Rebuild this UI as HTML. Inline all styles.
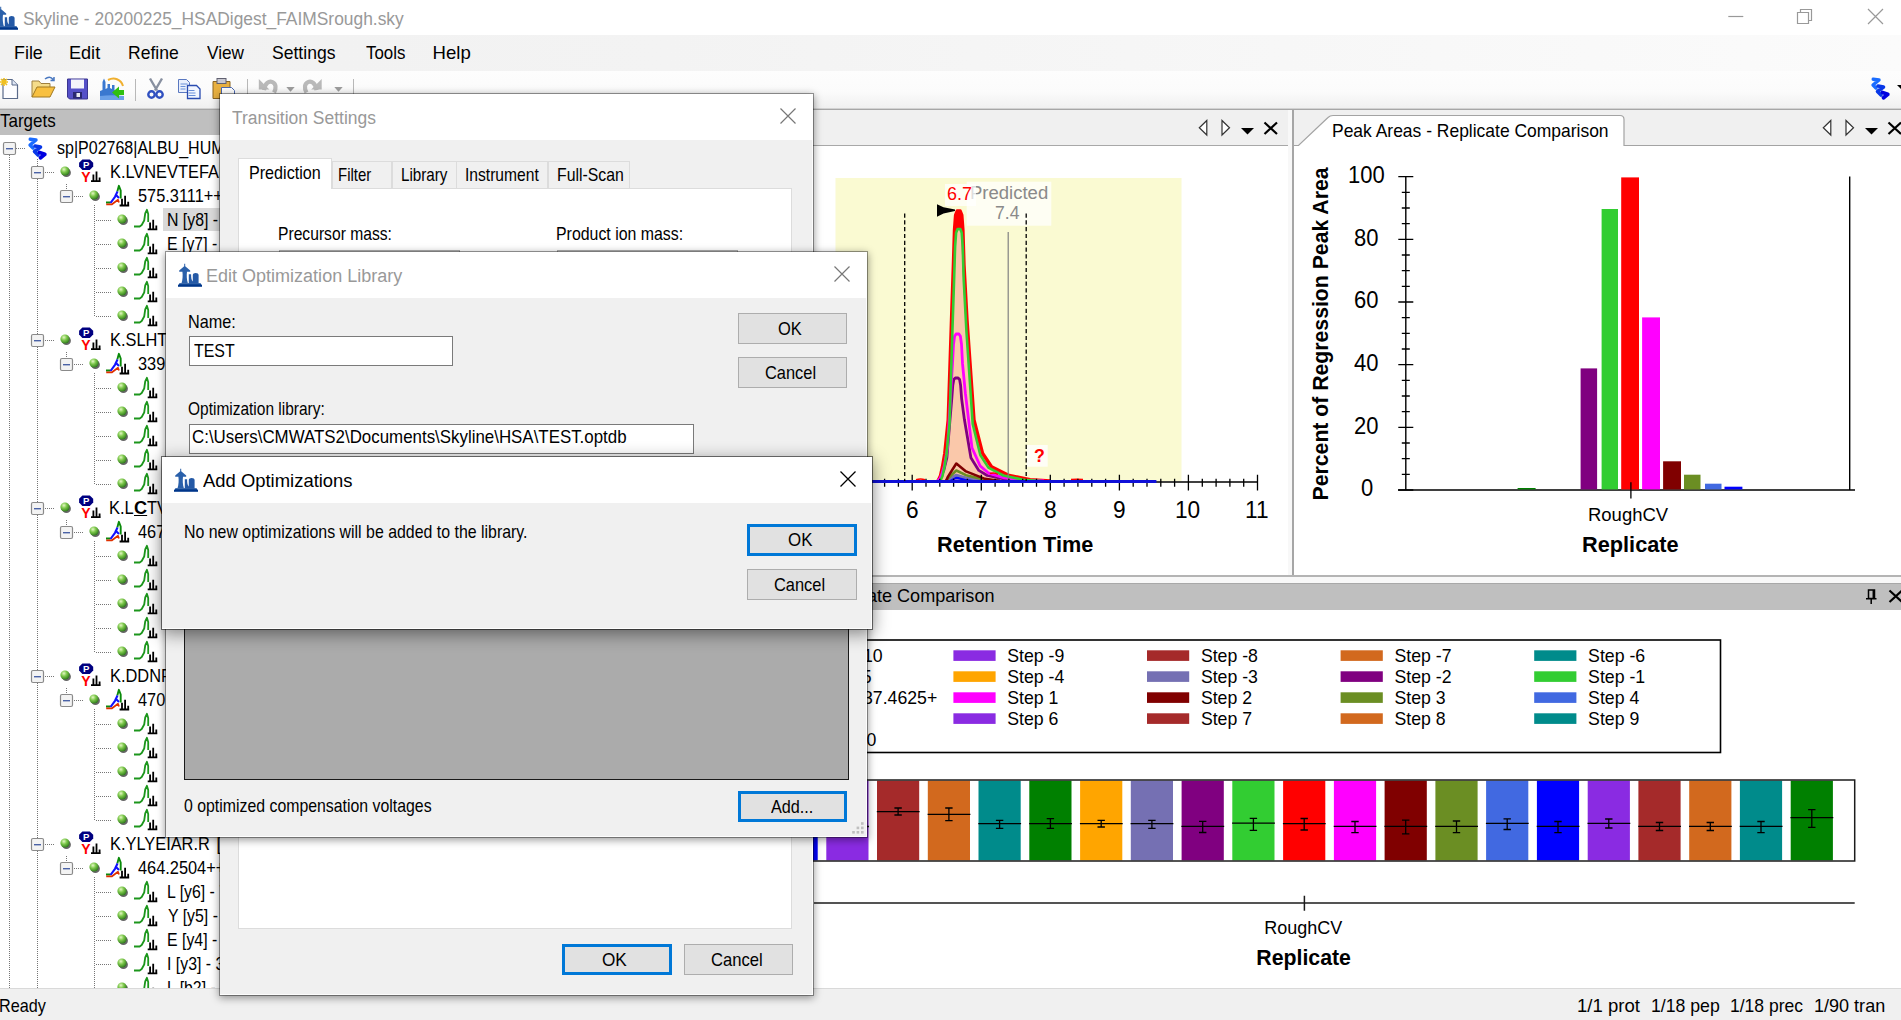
<!DOCTYPE html><html><head><meta charset="utf-8"><title>Skyline - 20200225_HSADigest_FAIMSrough.sky</title><style>
html,body{margin:0;padding:0;}
body{width:1901px;height:1020px;overflow:hidden;background:#fff;position:relative;font-family:"Liberation Sans",sans-serif;}
.b{position:absolute;box-sizing:border-box;}
.t{position:absolute;white-space:pre;line-height:normal;transform-origin:0 0;font-family:"Liberation Sans",sans-serif;}
.i{position:absolute;overflow:visible;}
.btn{background:#e1e1e1;border:1px solid #adadad;}
.btnd{background:#e1e1e1;border:3px solid #0078d7;}
.dlg{background:#f0f0f0;background-clip:padding-box;border:1px solid rgba(0,0,0,0.37);box-shadow:0 2px 8px 0 rgba(0,0,0,0.40),inset -1px -1px 0 rgba(255,255,255,0.85);}
.dlga{border-color:rgba(0,0,0,0.52);box-shadow:0 4px 16px 0 rgba(0,0,0,0.44),inset -1px -1px 0 rgba(255,255,255,0.85);}
.inp{background:#fff;border:1px solid #7a7a7a;}
</style></head><body>
<div class="b" style="left:0;top:0;width:1901px;height:35px;background:#fff">
<svg class="i" style="left:-6px;top:5.8px;" width="24" height="24" viewBox="0 0 24 24"><path d="M6.2 0.8h1v2.4l5 4.2v1.3h-3.2c-0.5 3.5-0.3 8 0.9 11.6h-6.4c1.2-3.6 1.4-8.1 0.9-11.6h-3.2v-1.3l5-4.2z" fill="#2a60aa"/><path d="M10.8 11.2h2.3c0 3.5 0.3 6 1.7 7.2v-6.4c0-1.3 1.2-2.1 2.9-2.1s2.9 0.8 2.9 2.1v8.4h-9.8z" fill="#2459a6"/><path d="M1.5 20.2h21l1.5 2v1.3h-24v-1.3z" fill="#0d4596"/><rect x="0" y="22" width="24" height="1.6" fill="#00358a"/></svg>
<span class="t" style="left:22.80px;top:9px;font-size:17.6px;line-height:20px;color:#999;transform:scaleX(0.9881);">Skyline - 20200225_HSADigest_FAIMSrough.sky</span>
<svg class="i" style="left:1720px;top:0px;" width="181" height="35" viewBox="0 0 181 35"><path d="M8.3 16.5h15" stroke="#999" stroke-width="1.2"/><path d="M77.5 12.5h11v11h-11zM80.5 12.5v-3h11v11h-3" stroke="#999" stroke-width="1.2" fill="none"/><path d="M148 9l15 15M163 9l-15 15" stroke="#999" stroke-width="1.2"/></svg>
</div>
<div class="b" style="left:0;top:35px;width:1901px;height:36px;background:linear-gradient(to right,#f1f1f1 0%,#f3f3f3 35%,#fbfbfb 100%)">
<span class="t" style="left:13.96px;top:7px;font-size:18.6px;line-height:21px;color:#000;transform:scaleX(0.9607);">File</span>
<span class="t" style="left:68.94px;top:7px;font-size:18.6px;line-height:21px;color:#000;transform:scaleX(0.9725);">Edit</span>
<span class="t" style="left:127.98px;top:7px;font-size:18.6px;line-height:21px;color:#000;transform:scaleX(0.9437);">Refine</span>
<span class="t" style="left:206.94px;top:7px;font-size:18.6px;line-height:21px;color:#000;transform:scaleX(0.9250);">View</span>
<span class="t" style="left:272.17px;top:7px;font-size:18.6px;line-height:21px;color:#000;transform:scaleX(0.9448);">Settings</span>
<span class="t" style="left:365.60px;top:7px;font-size:18.6px;line-height:21px;color:#000;transform:scaleX(0.9075);">Tools</span>
<span class="t" style="left:432.50px;top:7px;font-size:18.6px;line-height:21px;color:#000;">Help</span>
</div>
<div class="b" style="left:0;top:71px;width:1901px;height:38px;background:linear-gradient(#fdfdfd,#fbfbfb 55%,#efefef)"></div>
<div class="b" style="left:0;top:108px;width:1901px;height:1px;background:#d2d2d2"></div>
<div class="b" style="left:0;top:109px;width:1901px;height:1px;background:#a6a6a6"></div>
<svg class="i" style="left:0px;top:0px;" width="400" height="110" viewBox="0 0 400 110"><path d="M3 79.5h9l5.5 5.5v13.5h-14.5z" fill="#fdfdff" stroke="#5a6a8a" stroke-width="1.2"/><path d="M12 79.5v5.5h5.5" fill="#dfe6f5" stroke="#5a6a8a" stroke-width="1"/><path d="M0 82h8M4 78v8M1 79l6 6M7 79l-6 6" stroke="#f0c020" stroke-width="1.6"/><path d="M32 97v-16h7l2 2.5h9v4" fill="#f5dc8a" stroke="#a08040" stroke-width="1"/><path d="M32 97l5-10h18l-5 10z" fill="#f8c040" stroke="#a07820" stroke-width="1"/><path d="M45 79c3-2.5 6-2.5 8 0.5M54 77v3.5h-3.5" stroke="#4a78c0" stroke-width="1.5" fill="none"/><path d="M67.5 79h20v20h-18l-2-2z" fill="#5550c8" stroke="#3a3590" stroke-width="1"/><rect x="71" y="79.5" width="13" height="9" fill="#f4f4fa"/><rect x="73" y="92" width="9" height="6.5" fill="#2a2870"/><rect x="76.5" y="93" width="3.5" height="4" fill="#e8e8f0"/><path d="M100 100v-9l2.5-1v-8l1.5-3.5 1.5 3.5v7l2-1v-4h2.5v4l2 1v-4h2.5v5l2 2v8z" fill="#3a78d0"/><path d="M100 100h24v-4c-8-1-16-1-24 0z" fill="#6aa0e8"/><path d="M108 80c6-3 13-1 15 6" stroke="#f0b030" stroke-width="2" fill="none"/><path d="M124 90v5h-5v3.5l-7-6 7-6v3.5z" fill="#30c010"/><path d="M135.5 79v22" stroke="#b8b8b8" stroke-width="1"/><path d="M247.5 79v22" stroke="#b8b8b8" stroke-width="1"/><path d="M353.5 79v22" stroke="#b8b8b8" stroke-width="1"/><path d="M150 78.5l7 12M162 78.5l-7 12" stroke="#8890a0" stroke-width="2.4"/><circle cx="151.5" cy="94.5" r="3.2" fill="none" stroke="#3050c0" stroke-width="2.4"/><circle cx="159.5" cy="94.5" r="3.2" fill="none" stroke="#3050c0" stroke-width="2.4"/><path d="M178.5 79.5h8l3 3v10h-11z" fill="#e9effc" stroke="#5a78c0" stroke-width="1"/><path d="M187.500 85.500h9l3.500 3.500v9.500h-12.500z" fill="#f2f6ff" stroke="#2a4cb0" stroke-width="1.300"/><path d="M180.5 84h7M180.5 86.5h5M180.5 89h5M188.5 90.500h6M188.500 93h7M188.500 95.500h7" stroke="#6a90d8" stroke-width="1"/><path d="M213 81.500h17v17h-17z" fill="#e8b040" stroke="#8a6420" stroke-width="1"/><rect x="217" y="78.500" width="9" height="5" fill="#c8c8d0" stroke="#606070" stroke-width="1"/><path d="M221.5 87.500h10l3 3v9h-13z" fill="#fff" stroke="#4a68b0" stroke-width="1"/><g transform="translate(0,-1.400)"><path d="M264 91.500c1-7 5-9.500 8.500-8 3.500 1.500 4 6 1.500 10.500" stroke="#b9b9b9" stroke-width="4.200" fill="none"/><path d="M258.800 80.500v10.500h10.500z" fill="#b9b9b9"/><path d="M286.300 88.500h8.400l-4.200 4.600z" fill="#9d9d9d"/></g><g transform="translate(0,-1.400)"><path d="M316.500 91.500c-1-7-5-9.500-8.500-8-3.500 1.500-4 6-1.500 10.500" stroke="#b9b9b9" stroke-width="4.200" fill="none"/><path d="M321.700 80.500v10.500h-10.500z" fill="#b9b9b9"/><path d="M334.300 88.500h8.400l-4.200 4.600z" fill="#9d9d9d"/></g></svg>
<svg class="i" style="left:1871px;top:77px;" width="19" height="23" viewBox="0 0 19 23"><g fill="none" stroke-linecap="round" stroke-linejoin="round"><path d="M2.2 2.2L8 3L2 8L5 11" stroke="#1a6cff" stroke-width="3.4"/><path d="M7 9L12.500 10L6.500 14.500L10 18" stroke="#0838e8" stroke-width="3.600"/><path d="M11.500 15.500L16.800 17.300L12.500 20.800" stroke="#0000e0" stroke-width="3.800"/></g></svg>
<svg class="i" style="left:1895px;top:85px;" width="6" height="6" viewBox="0 0 6 6"><path d="M2 0h8l-4 4z" fill="#000"/></svg>
<div class="b" style="left:0;top:988px;width:1901px;height:32px;background:#f0f0f0">
<span class="t" style="left:-0.82px;top:7px;font-size:18.4px;line-height:21px;color:#000;transform:scaleX(0.8814);">Ready</span>
</div>
<div class="b" style="left:0;top:988px;width:1901px;height:1px;background:#d9d9d9"></div>
<span class="t" style="left:1577.41px;top:995px;font-size:18.4px;line-height:21px;color:#000;transform:scaleX(1.0076);">1/1 prot</span>
<span class="t" style="left:1651.08px;top:995px;font-size:18.4px;line-height:21px;color:#000;transform:scaleX(0.9606);">1/18 pep</span>
<span class="t" style="left:1730.49px;top:995px;font-size:18.4px;line-height:21px;color:#000;transform:scaleX(0.9517);">1/18 prec</span>
<span class="t" style="left:1814.25px;top:995px;font-size:18.4px;line-height:21px;color:#000;transform:scaleX(0.9806);">1/90 tran</span>
<div class="b" style="left:0;top:110px;width:830px;height:25px;background:#bfbfbf"></div>
<span class="t" style="left:-0.10px;top:110px;font-size:18.4px;line-height:21px;color:#000;transform:scaleX(0.9242);">Targets</span>
<div class="b" style="left:0;top:135px;width:830px;height:853px;background:#fff;overflow:hidden">
<svg class="i" style="left:0px;top:0px;" width="830" height="854" viewBox="0 0 830 854"><path d="M9.5 20V860" stroke="#757575" stroke-width="1" stroke-dasharray="1 1"/><path d="M37.5 24V860" stroke="#757575" stroke-width="1" stroke-dasharray="1 1"/><path d="M16 13.5H26" stroke="#757575" stroke-width="1" stroke-dasharray="1 1"/><path d="M45 37.5H54" stroke="#757575" stroke-width="1" stroke-dasharray="1 1"/><path d="M66.5 49V54" stroke="#757575" stroke-width="1" stroke-dasharray="1 1"/><path d="M74 61.5H83" stroke="#757575" stroke-width="1" stroke-dasharray="1 1"/><path d="M94.5 70V182" stroke="#757575" stroke-width="1" stroke-dasharray="1 1"/><path d="M96 85.5H111" stroke="#757575" stroke-width="1" stroke-dasharray="1 1"/><path d="M96 109.5H111" stroke="#757575" stroke-width="1" stroke-dasharray="1 1"/><path d="M96 133.5H111" stroke="#757575" stroke-width="1" stroke-dasharray="1 1"/><path d="M96 157.5H111" stroke="#757575" stroke-width="1" stroke-dasharray="1 1"/><path d="M96 181.5H111" stroke="#757575" stroke-width="1" stroke-dasharray="1 1"/><path d="M45 205.5H54" stroke="#757575" stroke-width="1" stroke-dasharray="1 1"/><path d="M66.5 217V222" stroke="#757575" stroke-width="1" stroke-dasharray="1 1"/><path d="M74 229.5H83" stroke="#757575" stroke-width="1" stroke-dasharray="1 1"/><path d="M94.5 238V350" stroke="#757575" stroke-width="1" stroke-dasharray="1 1"/><path d="M96 253.5H111" stroke="#757575" stroke-width="1" stroke-dasharray="1 1"/><path d="M96 277.5H111" stroke="#757575" stroke-width="1" stroke-dasharray="1 1"/><path d="M96 301.5H111" stroke="#757575" stroke-width="1" stroke-dasharray="1 1"/><path d="M96 325.5H111" stroke="#757575" stroke-width="1" stroke-dasharray="1 1"/><path d="M96 349.5H111" stroke="#757575" stroke-width="1" stroke-dasharray="1 1"/><path d="M45 373.5H54" stroke="#757575" stroke-width="1" stroke-dasharray="1 1"/><path d="M66.5 385V390" stroke="#757575" stroke-width="1" stroke-dasharray="1 1"/><path d="M74 397.5H83" stroke="#757575" stroke-width="1" stroke-dasharray="1 1"/><path d="M94.5 406V518" stroke="#757575" stroke-width="1" stroke-dasharray="1 1"/><path d="M96 421.5H111" stroke="#757575" stroke-width="1" stroke-dasharray="1 1"/><path d="M96 445.5H111" stroke="#757575" stroke-width="1" stroke-dasharray="1 1"/><path d="M96 469.5H111" stroke="#757575" stroke-width="1" stroke-dasharray="1 1"/><path d="M96 493.5H111" stroke="#757575" stroke-width="1" stroke-dasharray="1 1"/><path d="M96 517.5H111" stroke="#757575" stroke-width="1" stroke-dasharray="1 1"/><path d="M45 541.5H54" stroke="#757575" stroke-width="1" stroke-dasharray="1 1"/><path d="M66.5 553V558" stroke="#757575" stroke-width="1" stroke-dasharray="1 1"/><path d="M74 565.5H83" stroke="#757575" stroke-width="1" stroke-dasharray="1 1"/><path d="M94.5 574V686" stroke="#757575" stroke-width="1" stroke-dasharray="1 1"/><path d="M96 589.5H111" stroke="#757575" stroke-width="1" stroke-dasharray="1 1"/><path d="M96 613.5H111" stroke="#757575" stroke-width="1" stroke-dasharray="1 1"/><path d="M96 637.5H111" stroke="#757575" stroke-width="1" stroke-dasharray="1 1"/><path d="M96 661.5H111" stroke="#757575" stroke-width="1" stroke-dasharray="1 1"/><path d="M96 685.5H111" stroke="#757575" stroke-width="1" stroke-dasharray="1 1"/><path d="M45 709.5H54" stroke="#757575" stroke-width="1" stroke-dasharray="1 1"/><path d="M66.5 721V726" stroke="#757575" stroke-width="1" stroke-dasharray="1 1"/><path d="M74 733.5H83" stroke="#757575" stroke-width="1" stroke-dasharray="1 1"/><path d="M94.5 742V854" stroke="#757575" stroke-width="1" stroke-dasharray="1 1"/><path d="M96 757.5H111" stroke="#757575" stroke-width="1" stroke-dasharray="1 1"/><path d="M96 781.5H111" stroke="#757575" stroke-width="1" stroke-dasharray="1 1"/><path d="M96 805.5H111" stroke="#757575" stroke-width="1" stroke-dasharray="1 1"/><path d="M96 829.5H111" stroke="#757575" stroke-width="1" stroke-dasharray="1 1"/><path d="M96 853.5H111" stroke="#757575" stroke-width="1" stroke-dasharray="1 1"/></svg>
<svg class="i" style="left:3.0px;top:6.8px;" width="13" height="13" viewBox="0 0 13 13"><rect x="0.5" y="0.5" width="12" height="12" rx="1.500" fill="#f3f3f3" stroke="#8a8a8a" stroke-width="1.200"/><rect x="3" y="6" width="7" height="1.4" fill="#4a62a6"/></svg><svg class="i" style="left:28px;top:1.5px;" width="19" height="23" viewBox="0 0 19 23"><g fill="none" stroke-linecap="round" stroke-linejoin="round"><path d="M2.2 2.2L8 3L2 8L5 11" stroke="#1a6cff" stroke-width="3.4"/><path d="M7 9L12.500 10L6.500 14.500L10 18" stroke="#0838e8" stroke-width="3.600"/><path d="M11.500 15.500L16.800 17.300L12.500 20.800" stroke="#0000e0" stroke-width="3.800"/></g></svg><svg class="i" style="left:31.2px;top:30.7px;" width="13" height="13" viewBox="0 0 13 13"><rect x="0.5" y="0.5" width="12" height="12" rx="1.500" fill="#f3f3f3" stroke="#8a8a8a" stroke-width="1.200"/><rect x="3" y="6" width="7" height="1.4" fill="#4a62a6"/></svg><svg class="i" style="left:58.9px;top:30.3px;" width="13" height="13" viewBox="0 0 13 13"><radialGradient id="g1" cx="0.38" cy="0.32" r="0.7"><stop offset="0" stop-color="#e4f7c4"/><stop offset="0.45" stop-color="#7cc84a"/><stop offset="1" stop-color="#2f7a1c"/></radialGradient><ellipse cx="7.400" cy="7.700" rx="4.500" ry="4.400" fill="#333" opacity="0.750"/><circle cx="6" cy="6" r="4.600" fill="url(#g1)"/></svg><svg class="i" style="left:79px;top:24px;" width="23" height="24" viewBox="0 0 23 24"><path d="M3.4 0.4h7.4l3.4 3.300v3.800l-3.400 3.400h-7.400l-3.300-3.400v-3.800z" fill="#000080"/><text x="7.200" y="9.300" font-size="9.600" font-weight="bold" fill="#fff" text-anchor="middle" font-family="Liberation Sans,sans-serif">P</text><text x="7" y="22.6" font-size="14" font-weight="bold" fill="#f00" text-anchor="middle" font-family="Liberation Sans,sans-serif">Y</text><path d="M12 22.2h9.6M14.4 22.2v-6.800M17.5 22.2v-9.700M20.6 22.2v-3.800" stroke="#000" stroke-width="1.800" fill="none"/></svg><svg class="i" style="left:59.8px;top:54.7px;" width="13" height="13" viewBox="0 0 13 13"><rect x="0.5" y="0.5" width="12" height="12" rx="1.500" fill="#f3f3f3" stroke="#8a8a8a" stroke-width="1.200"/><rect x="3" y="6" width="7" height="1.4" fill="#4a62a6"/></svg><svg class="i" style="left:87.5px;top:54.3px;" width="13" height="13" viewBox="0 0 13 13"><radialGradient id="g2" cx="0.38" cy="0.32" r="0.7"><stop offset="0" stop-color="#e4f7c4"/><stop offset="0.45" stop-color="#7cc84a"/><stop offset="1" stop-color="#2f7a1c"/></radialGradient><ellipse cx="7.400" cy="7.700" rx="4.500" ry="4.400" fill="#333" opacity="0.750"/><circle cx="6" cy="6" r="4.600" fill="url(#g2)"/></svg><svg class="i" style="left:105.8px;top:50px;" width="24" height="22" viewBox="0 0 24 22"><path d="M0 17.500H4.500M11.300 6.500L12.900 0.800L14.700 5.500V13.500" stroke="#0a8a0a" stroke-width="1.900" fill="none" stroke-linejoin="round"/><path d="M4.500 18L9 11.800L11.500 6.500M9.500 9.500L13 13" stroke="#1010ff" stroke-width="2.100" fill="none" stroke-linejoin="round"/><path d="M0.200 19.300H6L12 14.800L13 17.500" stroke="#e03000" stroke-width="1.700" fill="none" stroke-linejoin="round"/><path d="M13.6 20.5h9.6M16.0 20.5v-6.800M19.1 20.5v-9.700M22.2 20.5v-3.800" stroke="#000" stroke-width="1.800" fill="none"/></svg><svg class="i" style="left:116.1px;top:78.3px;" width="13" height="13" viewBox="0 0 13 13"><radialGradient id="g3" cx="0.38" cy="0.32" r="0.7"><stop offset="0" stop-color="#e4f7c4"/><stop offset="0.45" stop-color="#7cc84a"/><stop offset="1" stop-color="#2f7a1c"/></radialGradient><ellipse cx="7.400" cy="7.700" rx="4.500" ry="4.400" fill="#333" opacity="0.750"/><circle cx="6" cy="6" r="4.600" fill="url(#g3)"/></svg><svg class="i" style="left:134.3px;top:74px;" width="24" height="22" viewBox="0 0 24 22"><path d="M0 17.500H5.700L7.700 16L10.200 11.500L11.200 4.500L12.900 0.800L14.200 5V13" stroke="#1c961c" stroke-width="1.800" fill="none" stroke-linejoin="round"/><path d="M13.7 20.4h9.6M16.1 20.4v-6.800M19.2 20.4v-9.700M22.3 20.4v-3.800" stroke="#000" stroke-width="1.800" fill="none"/></svg><svg class="i" style="left:116.1px;top:102.3px;" width="13" height="13" viewBox="0 0 13 13"><radialGradient id="g4" cx="0.38" cy="0.32" r="0.7"><stop offset="0" stop-color="#e4f7c4"/><stop offset="0.45" stop-color="#7cc84a"/><stop offset="1" stop-color="#2f7a1c"/></radialGradient><ellipse cx="7.400" cy="7.700" rx="4.500" ry="4.400" fill="#333" opacity="0.750"/><circle cx="6" cy="6" r="4.600" fill="url(#g4)"/></svg><svg class="i" style="left:134.3px;top:98px;" width="24" height="22" viewBox="0 0 24 22"><path d="M0 17.500H5.700L7.700 16L10.200 11.500L11.200 4.500L12.900 0.800L14.200 5V13" stroke="#1c961c" stroke-width="1.800" fill="none" stroke-linejoin="round"/><path d="M13.7 20.4h9.6M16.1 20.4v-6.800M19.2 20.4v-9.700M22.3 20.4v-3.800" stroke="#000" stroke-width="1.800" fill="none"/></svg><svg class="i" style="left:116.1px;top:126.3px;" width="13" height="13" viewBox="0 0 13 13"><radialGradient id="g5" cx="0.38" cy="0.32" r="0.7"><stop offset="0" stop-color="#e4f7c4"/><stop offset="0.45" stop-color="#7cc84a"/><stop offset="1" stop-color="#2f7a1c"/></radialGradient><ellipse cx="7.400" cy="7.700" rx="4.500" ry="4.400" fill="#333" opacity="0.750"/><circle cx="6" cy="6" r="4.600" fill="url(#g5)"/></svg><svg class="i" style="left:134.3px;top:122px;" width="24" height="22" viewBox="0 0 24 22"><path d="M0 17.500H5.700L7.700 16L10.200 11.500L11.200 4.500L12.900 0.800L14.200 5V13" stroke="#1c961c" stroke-width="1.800" fill="none" stroke-linejoin="round"/><path d="M13.7 20.4h9.6M16.1 20.4v-6.800M19.2 20.4v-9.700M22.3 20.4v-3.800" stroke="#000" stroke-width="1.800" fill="none"/></svg><svg class="i" style="left:116.1px;top:150.3px;" width="13" height="13" viewBox="0 0 13 13"><radialGradient id="g6" cx="0.38" cy="0.32" r="0.7"><stop offset="0" stop-color="#e4f7c4"/><stop offset="0.45" stop-color="#7cc84a"/><stop offset="1" stop-color="#2f7a1c"/></radialGradient><ellipse cx="7.400" cy="7.700" rx="4.500" ry="4.400" fill="#333" opacity="0.750"/><circle cx="6" cy="6" r="4.600" fill="url(#g6)"/></svg><svg class="i" style="left:134.3px;top:146px;" width="24" height="22" viewBox="0 0 24 22"><path d="M0 17.500H5.700L7.700 16L10.200 11.500L11.200 4.500L12.900 0.800L14.200 5V13" stroke="#1c961c" stroke-width="1.800" fill="none" stroke-linejoin="round"/><path d="M13.7 20.4h9.6M16.1 20.4v-6.800M19.2 20.4v-9.700M22.3 20.4v-3.800" stroke="#000" stroke-width="1.800" fill="none"/></svg><svg class="i" style="left:116.1px;top:174.3px;" width="13" height="13" viewBox="0 0 13 13"><radialGradient id="g7" cx="0.38" cy="0.32" r="0.7"><stop offset="0" stop-color="#e4f7c4"/><stop offset="0.45" stop-color="#7cc84a"/><stop offset="1" stop-color="#2f7a1c"/></radialGradient><ellipse cx="7.400" cy="7.700" rx="4.500" ry="4.400" fill="#333" opacity="0.750"/><circle cx="6" cy="6" r="4.600" fill="url(#g7)"/></svg><svg class="i" style="left:134.3px;top:170px;" width="24" height="22" viewBox="0 0 24 22"><path d="M0 17.500H5.700L7.700 16L10.200 11.500L11.200 4.500L12.900 0.800L14.200 5V13" stroke="#1c961c" stroke-width="1.800" fill="none" stroke-linejoin="round"/><path d="M13.7 20.4h9.6M16.1 20.4v-6.800M19.2 20.4v-9.700M22.3 20.4v-3.800" stroke="#000" stroke-width="1.800" fill="none"/></svg><svg class="i" style="left:31.2px;top:198.7px;" width="13" height="13" viewBox="0 0 13 13"><rect x="0.5" y="0.5" width="12" height="12" rx="1.500" fill="#f3f3f3" stroke="#8a8a8a" stroke-width="1.200"/><rect x="3" y="6" width="7" height="1.4" fill="#4a62a6"/></svg><svg class="i" style="left:58.9px;top:198.3px;" width="13" height="13" viewBox="0 0 13 13"><radialGradient id="g8" cx="0.38" cy="0.32" r="0.7"><stop offset="0" stop-color="#e4f7c4"/><stop offset="0.45" stop-color="#7cc84a"/><stop offset="1" stop-color="#2f7a1c"/></radialGradient><ellipse cx="7.400" cy="7.700" rx="4.500" ry="4.400" fill="#333" opacity="0.750"/><circle cx="6" cy="6" r="4.600" fill="url(#g8)"/></svg><svg class="i" style="left:79px;top:192px;" width="23" height="24" viewBox="0 0 23 24"><path d="M3.4 0.4h7.4l3.4 3.300v3.800l-3.400 3.400h-7.400l-3.300-3.400v-3.800z" fill="#000080"/><text x="7.200" y="9.300" font-size="9.600" font-weight="bold" fill="#fff" text-anchor="middle" font-family="Liberation Sans,sans-serif">P</text><text x="7" y="22.6" font-size="14" font-weight="bold" fill="#f00" text-anchor="middle" font-family="Liberation Sans,sans-serif">Y</text><path d="M12 22.2h9.6M14.4 22.2v-6.800M17.5 22.2v-9.700M20.6 22.2v-3.800" stroke="#000" stroke-width="1.800" fill="none"/></svg><svg class="i" style="left:59.8px;top:222.7px;" width="13" height="13" viewBox="0 0 13 13"><rect x="0.5" y="0.5" width="12" height="12" rx="1.500" fill="#f3f3f3" stroke="#8a8a8a" stroke-width="1.200"/><rect x="3" y="6" width="7" height="1.4" fill="#4a62a6"/></svg><svg class="i" style="left:87.5px;top:222.3px;" width="13" height="13" viewBox="0 0 13 13"><radialGradient id="g9" cx="0.38" cy="0.32" r="0.7"><stop offset="0" stop-color="#e4f7c4"/><stop offset="0.45" stop-color="#7cc84a"/><stop offset="1" stop-color="#2f7a1c"/></radialGradient><ellipse cx="7.400" cy="7.700" rx="4.500" ry="4.400" fill="#333" opacity="0.750"/><circle cx="6" cy="6" r="4.600" fill="url(#g9)"/></svg><svg class="i" style="left:105.8px;top:218px;" width="24" height="22" viewBox="0 0 24 22"><path d="M0 17.500H4.500M11.300 6.500L12.900 0.800L14.700 5.500V13.500" stroke="#0a8a0a" stroke-width="1.900" fill="none" stroke-linejoin="round"/><path d="M4.500 18L9 11.800L11.500 6.500M9.500 9.500L13 13" stroke="#1010ff" stroke-width="2.100" fill="none" stroke-linejoin="round"/><path d="M0.200 19.300H6L12 14.800L13 17.500" stroke="#e03000" stroke-width="1.700" fill="none" stroke-linejoin="round"/><path d="M13.6 20.5h9.6M16.0 20.5v-6.800M19.1 20.5v-9.700M22.2 20.5v-3.800" stroke="#000" stroke-width="1.800" fill="none"/></svg><svg class="i" style="left:116.1px;top:246.3px;" width="13" height="13" viewBox="0 0 13 13"><radialGradient id="g10" cx="0.38" cy="0.32" r="0.7"><stop offset="0" stop-color="#e4f7c4"/><stop offset="0.45" stop-color="#7cc84a"/><stop offset="1" stop-color="#2f7a1c"/></radialGradient><ellipse cx="7.400" cy="7.700" rx="4.500" ry="4.400" fill="#333" opacity="0.750"/><circle cx="6" cy="6" r="4.600" fill="url(#g10)"/></svg><svg class="i" style="left:134.3px;top:242px;" width="24" height="22" viewBox="0 0 24 22"><path d="M0 17.500H5.700L7.700 16L10.200 11.500L11.200 4.500L12.900 0.800L14.200 5V13" stroke="#1c961c" stroke-width="1.800" fill="none" stroke-linejoin="round"/><path d="M13.7 20.4h9.6M16.1 20.4v-6.800M19.2 20.4v-9.700M22.3 20.4v-3.800" stroke="#000" stroke-width="1.800" fill="none"/></svg><svg class="i" style="left:116.1px;top:270.3px;" width="13" height="13" viewBox="0 0 13 13"><radialGradient id="g11" cx="0.38" cy="0.32" r="0.7"><stop offset="0" stop-color="#e4f7c4"/><stop offset="0.45" stop-color="#7cc84a"/><stop offset="1" stop-color="#2f7a1c"/></radialGradient><ellipse cx="7.400" cy="7.700" rx="4.500" ry="4.400" fill="#333" opacity="0.750"/><circle cx="6" cy="6" r="4.600" fill="url(#g11)"/></svg><svg class="i" style="left:134.3px;top:266px;" width="24" height="22" viewBox="0 0 24 22"><path d="M0 17.500H5.700L7.700 16L10.200 11.500L11.200 4.500L12.900 0.800L14.200 5V13" stroke="#1c961c" stroke-width="1.800" fill="none" stroke-linejoin="round"/><path d="M13.7 20.4h9.6M16.1 20.4v-6.800M19.2 20.4v-9.700M22.3 20.4v-3.800" stroke="#000" stroke-width="1.800" fill="none"/></svg><svg class="i" style="left:116.1px;top:294.3px;" width="13" height="13" viewBox="0 0 13 13"><radialGradient id="g12" cx="0.38" cy="0.32" r="0.7"><stop offset="0" stop-color="#e4f7c4"/><stop offset="0.45" stop-color="#7cc84a"/><stop offset="1" stop-color="#2f7a1c"/></radialGradient><ellipse cx="7.400" cy="7.700" rx="4.500" ry="4.400" fill="#333" opacity="0.750"/><circle cx="6" cy="6" r="4.600" fill="url(#g12)"/></svg><svg class="i" style="left:134.3px;top:290px;" width="24" height="22" viewBox="0 0 24 22"><path d="M0 17.500H5.700L7.700 16L10.200 11.500L11.200 4.500L12.900 0.800L14.200 5V13" stroke="#1c961c" stroke-width="1.800" fill="none" stroke-linejoin="round"/><path d="M13.7 20.4h9.6M16.1 20.4v-6.800M19.2 20.4v-9.700M22.3 20.4v-3.800" stroke="#000" stroke-width="1.800" fill="none"/></svg><svg class="i" style="left:116.1px;top:318.3px;" width="13" height="13" viewBox="0 0 13 13"><radialGradient id="g13" cx="0.38" cy="0.32" r="0.7"><stop offset="0" stop-color="#e4f7c4"/><stop offset="0.45" stop-color="#7cc84a"/><stop offset="1" stop-color="#2f7a1c"/></radialGradient><ellipse cx="7.400" cy="7.700" rx="4.500" ry="4.400" fill="#333" opacity="0.750"/><circle cx="6" cy="6" r="4.600" fill="url(#g13)"/></svg><svg class="i" style="left:134.3px;top:314px;" width="24" height="22" viewBox="0 0 24 22"><path d="M0 17.500H5.700L7.700 16L10.200 11.500L11.200 4.500L12.900 0.800L14.200 5V13" stroke="#1c961c" stroke-width="1.800" fill="none" stroke-linejoin="round"/><path d="M13.7 20.4h9.6M16.1 20.4v-6.800M19.2 20.4v-9.700M22.3 20.4v-3.800" stroke="#000" stroke-width="1.800" fill="none"/></svg><svg class="i" style="left:116.1px;top:342.3px;" width="13" height="13" viewBox="0 0 13 13"><radialGradient id="g14" cx="0.38" cy="0.32" r="0.7"><stop offset="0" stop-color="#e4f7c4"/><stop offset="0.45" stop-color="#7cc84a"/><stop offset="1" stop-color="#2f7a1c"/></radialGradient><ellipse cx="7.400" cy="7.700" rx="4.500" ry="4.400" fill="#333" opacity="0.750"/><circle cx="6" cy="6" r="4.600" fill="url(#g14)"/></svg><svg class="i" style="left:134.3px;top:338px;" width="24" height="22" viewBox="0 0 24 22"><path d="M0 17.500H5.700L7.700 16L10.200 11.500L11.200 4.500L12.900 0.800L14.200 5V13" stroke="#1c961c" stroke-width="1.800" fill="none" stroke-linejoin="round"/><path d="M13.7 20.4h9.6M16.1 20.4v-6.800M19.2 20.4v-9.700M22.3 20.4v-3.800" stroke="#000" stroke-width="1.800" fill="none"/></svg><svg class="i" style="left:31.2px;top:366.7px;" width="13" height="13" viewBox="0 0 13 13"><rect x="0.5" y="0.5" width="12" height="12" rx="1.500" fill="#f3f3f3" stroke="#8a8a8a" stroke-width="1.200"/><rect x="3" y="6" width="7" height="1.4" fill="#4a62a6"/></svg><svg class="i" style="left:58.9px;top:366.3px;" width="13" height="13" viewBox="0 0 13 13"><radialGradient id="g15" cx="0.38" cy="0.32" r="0.7"><stop offset="0" stop-color="#e4f7c4"/><stop offset="0.45" stop-color="#7cc84a"/><stop offset="1" stop-color="#2f7a1c"/></radialGradient><ellipse cx="7.400" cy="7.700" rx="4.500" ry="4.400" fill="#333" opacity="0.750"/><circle cx="6" cy="6" r="4.600" fill="url(#g15)"/></svg><svg class="i" style="left:79px;top:360px;" width="23" height="24" viewBox="0 0 23 24"><path d="M3.4 0.4h7.4l3.4 3.300v3.800l-3.400 3.400h-7.400l-3.300-3.400v-3.800z" fill="#000080"/><text x="7.200" y="9.300" font-size="9.600" font-weight="bold" fill="#fff" text-anchor="middle" font-family="Liberation Sans,sans-serif">P</text><text x="7" y="22.6" font-size="14" font-weight="bold" fill="#f00" text-anchor="middle" font-family="Liberation Sans,sans-serif">Y</text><path d="M12 22.2h9.6M14.4 22.2v-6.800M17.5 22.2v-9.700M20.6 22.2v-3.800" stroke="#000" stroke-width="1.800" fill="none"/></svg><svg class="i" style="left:59.8px;top:390.7px;" width="13" height="13" viewBox="0 0 13 13"><rect x="0.5" y="0.5" width="12" height="12" rx="1.500" fill="#f3f3f3" stroke="#8a8a8a" stroke-width="1.200"/><rect x="3" y="6" width="7" height="1.4" fill="#4a62a6"/></svg><svg class="i" style="left:87.5px;top:390.3px;" width="13" height="13" viewBox="0 0 13 13"><radialGradient id="g16" cx="0.38" cy="0.32" r="0.7"><stop offset="0" stop-color="#e4f7c4"/><stop offset="0.45" stop-color="#7cc84a"/><stop offset="1" stop-color="#2f7a1c"/></radialGradient><ellipse cx="7.400" cy="7.700" rx="4.500" ry="4.400" fill="#333" opacity="0.750"/><circle cx="6" cy="6" r="4.600" fill="url(#g16)"/></svg><svg class="i" style="left:105.8px;top:386px;" width="24" height="22" viewBox="0 0 24 22"><path d="M0 17.500H4.500M11.300 6.500L12.900 0.800L14.700 5.500V13.500" stroke="#0a8a0a" stroke-width="1.900" fill="none" stroke-linejoin="round"/><path d="M4.500 18L9 11.800L11.500 6.500M9.500 9.500L13 13" stroke="#1010ff" stroke-width="2.100" fill="none" stroke-linejoin="round"/><path d="M0.200 19.300H6L12 14.800L13 17.500" stroke="#e03000" stroke-width="1.700" fill="none" stroke-linejoin="round"/><path d="M13.6 20.5h9.6M16.0 20.5v-6.800M19.1 20.5v-9.700M22.2 20.5v-3.800" stroke="#000" stroke-width="1.800" fill="none"/></svg><svg class="i" style="left:116.1px;top:414.3px;" width="13" height="13" viewBox="0 0 13 13"><radialGradient id="g17" cx="0.38" cy="0.32" r="0.7"><stop offset="0" stop-color="#e4f7c4"/><stop offset="0.45" stop-color="#7cc84a"/><stop offset="1" stop-color="#2f7a1c"/></radialGradient><ellipse cx="7.400" cy="7.700" rx="4.500" ry="4.400" fill="#333" opacity="0.750"/><circle cx="6" cy="6" r="4.600" fill="url(#g17)"/></svg><svg class="i" style="left:134.3px;top:410px;" width="24" height="22" viewBox="0 0 24 22"><path d="M0 17.500H5.700L7.700 16L10.200 11.500L11.200 4.500L12.900 0.800L14.200 5V13" stroke="#1c961c" stroke-width="1.800" fill="none" stroke-linejoin="round"/><path d="M13.7 20.4h9.6M16.1 20.4v-6.800M19.2 20.4v-9.700M22.3 20.4v-3.800" stroke="#000" stroke-width="1.800" fill="none"/></svg><svg class="i" style="left:116.1px;top:438.3px;" width="13" height="13" viewBox="0 0 13 13"><radialGradient id="g18" cx="0.38" cy="0.32" r="0.7"><stop offset="0" stop-color="#e4f7c4"/><stop offset="0.45" stop-color="#7cc84a"/><stop offset="1" stop-color="#2f7a1c"/></radialGradient><ellipse cx="7.400" cy="7.700" rx="4.500" ry="4.400" fill="#333" opacity="0.750"/><circle cx="6" cy="6" r="4.600" fill="url(#g18)"/></svg><svg class="i" style="left:134.3px;top:434px;" width="24" height="22" viewBox="0 0 24 22"><path d="M0 17.500H5.700L7.700 16L10.200 11.500L11.200 4.500L12.900 0.800L14.200 5V13" stroke="#1c961c" stroke-width="1.800" fill="none" stroke-linejoin="round"/><path d="M13.7 20.4h9.6M16.1 20.4v-6.800M19.2 20.4v-9.700M22.3 20.4v-3.800" stroke="#000" stroke-width="1.800" fill="none"/></svg><svg class="i" style="left:116.1px;top:462.3px;" width="13" height="13" viewBox="0 0 13 13"><radialGradient id="g19" cx="0.38" cy="0.32" r="0.7"><stop offset="0" stop-color="#e4f7c4"/><stop offset="0.45" stop-color="#7cc84a"/><stop offset="1" stop-color="#2f7a1c"/></radialGradient><ellipse cx="7.400" cy="7.700" rx="4.500" ry="4.400" fill="#333" opacity="0.750"/><circle cx="6" cy="6" r="4.600" fill="url(#g19)"/></svg><svg class="i" style="left:134.3px;top:458px;" width="24" height="22" viewBox="0 0 24 22"><path d="M0 17.500H5.700L7.700 16L10.200 11.500L11.200 4.500L12.900 0.800L14.200 5V13" stroke="#1c961c" stroke-width="1.800" fill="none" stroke-linejoin="round"/><path d="M13.7 20.4h9.6M16.1 20.4v-6.800M19.2 20.4v-9.700M22.3 20.4v-3.800" stroke="#000" stroke-width="1.800" fill="none"/></svg><svg class="i" style="left:116.1px;top:486.3px;" width="13" height="13" viewBox="0 0 13 13"><radialGradient id="g20" cx="0.38" cy="0.32" r="0.7"><stop offset="0" stop-color="#e4f7c4"/><stop offset="0.45" stop-color="#7cc84a"/><stop offset="1" stop-color="#2f7a1c"/></radialGradient><ellipse cx="7.400" cy="7.700" rx="4.500" ry="4.400" fill="#333" opacity="0.750"/><circle cx="6" cy="6" r="4.600" fill="url(#g20)"/></svg><svg class="i" style="left:134.3px;top:482px;" width="24" height="22" viewBox="0 0 24 22"><path d="M0 17.500H5.700L7.700 16L10.200 11.500L11.200 4.500L12.900 0.800L14.200 5V13" stroke="#1c961c" stroke-width="1.800" fill="none" stroke-linejoin="round"/><path d="M13.7 20.4h9.6M16.1 20.4v-6.800M19.2 20.4v-9.700M22.3 20.4v-3.800" stroke="#000" stroke-width="1.800" fill="none"/></svg><svg class="i" style="left:116.1px;top:510.3px;" width="13" height="13" viewBox="0 0 13 13"><radialGradient id="g21" cx="0.38" cy="0.32" r="0.7"><stop offset="0" stop-color="#e4f7c4"/><stop offset="0.45" stop-color="#7cc84a"/><stop offset="1" stop-color="#2f7a1c"/></radialGradient><ellipse cx="7.400" cy="7.700" rx="4.500" ry="4.400" fill="#333" opacity="0.750"/><circle cx="6" cy="6" r="4.600" fill="url(#g21)"/></svg><svg class="i" style="left:134.3px;top:506px;" width="24" height="22" viewBox="0 0 24 22"><path d="M0 17.500H5.700L7.700 16L10.200 11.500L11.200 4.500L12.900 0.800L14.200 5V13" stroke="#1c961c" stroke-width="1.800" fill="none" stroke-linejoin="round"/><path d="M13.7 20.4h9.6M16.1 20.4v-6.800M19.2 20.4v-9.700M22.3 20.4v-3.800" stroke="#000" stroke-width="1.800" fill="none"/></svg><svg class="i" style="left:31.2px;top:534.7px;" width="13" height="13" viewBox="0 0 13 13"><rect x="0.5" y="0.5" width="12" height="12" rx="1.500" fill="#f3f3f3" stroke="#8a8a8a" stroke-width="1.200"/><rect x="3" y="6" width="7" height="1.4" fill="#4a62a6"/></svg><svg class="i" style="left:58.9px;top:534.3px;" width="13" height="13" viewBox="0 0 13 13"><radialGradient id="g22" cx="0.38" cy="0.32" r="0.7"><stop offset="0" stop-color="#e4f7c4"/><stop offset="0.45" stop-color="#7cc84a"/><stop offset="1" stop-color="#2f7a1c"/></radialGradient><ellipse cx="7.400" cy="7.700" rx="4.500" ry="4.400" fill="#333" opacity="0.750"/><circle cx="6" cy="6" r="4.600" fill="url(#g22)"/></svg><svg class="i" style="left:79px;top:528px;" width="23" height="24" viewBox="0 0 23 24"><path d="M3.4 0.4h7.4l3.4 3.300v3.800l-3.400 3.400h-7.400l-3.300-3.400v-3.800z" fill="#000080"/><text x="7.200" y="9.300" font-size="9.600" font-weight="bold" fill="#fff" text-anchor="middle" font-family="Liberation Sans,sans-serif">P</text><text x="7" y="22.6" font-size="14" font-weight="bold" fill="#f00" text-anchor="middle" font-family="Liberation Sans,sans-serif">Y</text><path d="M12 22.2h9.6M14.4 22.2v-6.800M17.5 22.2v-9.700M20.6 22.2v-3.800" stroke="#000" stroke-width="1.800" fill="none"/></svg><svg class="i" style="left:59.8px;top:558.7px;" width="13" height="13" viewBox="0 0 13 13"><rect x="0.5" y="0.5" width="12" height="12" rx="1.500" fill="#f3f3f3" stroke="#8a8a8a" stroke-width="1.200"/><rect x="3" y="6" width="7" height="1.4" fill="#4a62a6"/></svg><svg class="i" style="left:87.5px;top:558.3px;" width="13" height="13" viewBox="0 0 13 13"><radialGradient id="g23" cx="0.38" cy="0.32" r="0.7"><stop offset="0" stop-color="#e4f7c4"/><stop offset="0.45" stop-color="#7cc84a"/><stop offset="1" stop-color="#2f7a1c"/></radialGradient><ellipse cx="7.400" cy="7.700" rx="4.500" ry="4.400" fill="#333" opacity="0.750"/><circle cx="6" cy="6" r="4.600" fill="url(#g23)"/></svg><svg class="i" style="left:105.8px;top:554px;" width="24" height="22" viewBox="0 0 24 22"><path d="M0 17.500H4.500M11.300 6.500L12.900 0.800L14.700 5.500V13.500" stroke="#0a8a0a" stroke-width="1.900" fill="none" stroke-linejoin="round"/><path d="M4.500 18L9 11.800L11.500 6.500M9.500 9.500L13 13" stroke="#1010ff" stroke-width="2.100" fill="none" stroke-linejoin="round"/><path d="M0.200 19.300H6L12 14.800L13 17.500" stroke="#e03000" stroke-width="1.700" fill="none" stroke-linejoin="round"/><path d="M13.6 20.5h9.6M16.0 20.5v-6.800M19.1 20.5v-9.700M22.2 20.5v-3.800" stroke="#000" stroke-width="1.800" fill="none"/></svg><svg class="i" style="left:116.1px;top:582.3px;" width="13" height="13" viewBox="0 0 13 13"><radialGradient id="g24" cx="0.38" cy="0.32" r="0.7"><stop offset="0" stop-color="#e4f7c4"/><stop offset="0.45" stop-color="#7cc84a"/><stop offset="1" stop-color="#2f7a1c"/></radialGradient><ellipse cx="7.400" cy="7.700" rx="4.500" ry="4.400" fill="#333" opacity="0.750"/><circle cx="6" cy="6" r="4.600" fill="url(#g24)"/></svg><svg class="i" style="left:134.3px;top:578px;" width="24" height="22" viewBox="0 0 24 22"><path d="M0 17.500H5.700L7.700 16L10.200 11.500L11.200 4.500L12.900 0.800L14.200 5V13" stroke="#1c961c" stroke-width="1.800" fill="none" stroke-linejoin="round"/><path d="M13.7 20.4h9.6M16.1 20.4v-6.800M19.2 20.4v-9.700M22.3 20.4v-3.800" stroke="#000" stroke-width="1.800" fill="none"/></svg><svg class="i" style="left:116.1px;top:606.3px;" width="13" height="13" viewBox="0 0 13 13"><radialGradient id="g25" cx="0.38" cy="0.32" r="0.7"><stop offset="0" stop-color="#e4f7c4"/><stop offset="0.45" stop-color="#7cc84a"/><stop offset="1" stop-color="#2f7a1c"/></radialGradient><ellipse cx="7.400" cy="7.700" rx="4.500" ry="4.400" fill="#333" opacity="0.750"/><circle cx="6" cy="6" r="4.600" fill="url(#g25)"/></svg><svg class="i" style="left:134.3px;top:602px;" width="24" height="22" viewBox="0 0 24 22"><path d="M0 17.500H5.700L7.700 16L10.200 11.500L11.200 4.500L12.900 0.800L14.200 5V13" stroke="#1c961c" stroke-width="1.800" fill="none" stroke-linejoin="round"/><path d="M13.7 20.4h9.6M16.1 20.4v-6.800M19.2 20.4v-9.700M22.3 20.4v-3.800" stroke="#000" stroke-width="1.800" fill="none"/></svg><svg class="i" style="left:116.1px;top:630.3px;" width="13" height="13" viewBox="0 0 13 13"><radialGradient id="g26" cx="0.38" cy="0.32" r="0.7"><stop offset="0" stop-color="#e4f7c4"/><stop offset="0.45" stop-color="#7cc84a"/><stop offset="1" stop-color="#2f7a1c"/></radialGradient><ellipse cx="7.400" cy="7.700" rx="4.500" ry="4.400" fill="#333" opacity="0.750"/><circle cx="6" cy="6" r="4.600" fill="url(#g26)"/></svg><svg class="i" style="left:134.3px;top:626px;" width="24" height="22" viewBox="0 0 24 22"><path d="M0 17.500H5.700L7.700 16L10.200 11.500L11.200 4.500L12.900 0.800L14.200 5V13" stroke="#1c961c" stroke-width="1.800" fill="none" stroke-linejoin="round"/><path d="M13.7 20.4h9.6M16.1 20.4v-6.800M19.2 20.4v-9.700M22.3 20.4v-3.800" stroke="#000" stroke-width="1.800" fill="none"/></svg><svg class="i" style="left:116.1px;top:654.3px;" width="13" height="13" viewBox="0 0 13 13"><radialGradient id="g27" cx="0.38" cy="0.32" r="0.7"><stop offset="0" stop-color="#e4f7c4"/><stop offset="0.45" stop-color="#7cc84a"/><stop offset="1" stop-color="#2f7a1c"/></radialGradient><ellipse cx="7.400" cy="7.700" rx="4.500" ry="4.400" fill="#333" opacity="0.750"/><circle cx="6" cy="6" r="4.600" fill="url(#g27)"/></svg><svg class="i" style="left:134.3px;top:650px;" width="24" height="22" viewBox="0 0 24 22"><path d="M0 17.500H5.700L7.700 16L10.200 11.500L11.200 4.500L12.900 0.800L14.200 5V13" stroke="#1c961c" stroke-width="1.800" fill="none" stroke-linejoin="round"/><path d="M13.7 20.4h9.6M16.1 20.4v-6.800M19.2 20.4v-9.700M22.3 20.4v-3.800" stroke="#000" stroke-width="1.800" fill="none"/></svg><svg class="i" style="left:116.1px;top:678.3px;" width="13" height="13" viewBox="0 0 13 13"><radialGradient id="g28" cx="0.38" cy="0.32" r="0.7"><stop offset="0" stop-color="#e4f7c4"/><stop offset="0.45" stop-color="#7cc84a"/><stop offset="1" stop-color="#2f7a1c"/></radialGradient><ellipse cx="7.400" cy="7.700" rx="4.500" ry="4.400" fill="#333" opacity="0.750"/><circle cx="6" cy="6" r="4.600" fill="url(#g28)"/></svg><svg class="i" style="left:134.3px;top:674px;" width="24" height="22" viewBox="0 0 24 22"><path d="M0 17.500H5.700L7.700 16L10.200 11.500L11.200 4.500L12.900 0.800L14.200 5V13" stroke="#1c961c" stroke-width="1.800" fill="none" stroke-linejoin="round"/><path d="M13.7 20.4h9.6M16.1 20.4v-6.800M19.2 20.4v-9.700M22.3 20.4v-3.800" stroke="#000" stroke-width="1.800" fill="none"/></svg><svg class="i" style="left:31.2px;top:702.7px;" width="13" height="13" viewBox="0 0 13 13"><rect x="0.5" y="0.5" width="12" height="12" rx="1.500" fill="#f3f3f3" stroke="#8a8a8a" stroke-width="1.200"/><rect x="3" y="6" width="7" height="1.4" fill="#4a62a6"/></svg><svg class="i" style="left:58.9px;top:702.3px;" width="13" height="13" viewBox="0 0 13 13"><radialGradient id="g29" cx="0.38" cy="0.32" r="0.7"><stop offset="0" stop-color="#e4f7c4"/><stop offset="0.45" stop-color="#7cc84a"/><stop offset="1" stop-color="#2f7a1c"/></radialGradient><ellipse cx="7.400" cy="7.700" rx="4.500" ry="4.400" fill="#333" opacity="0.750"/><circle cx="6" cy="6" r="4.600" fill="url(#g29)"/></svg><svg class="i" style="left:79px;top:696px;" width="23" height="24" viewBox="0 0 23 24"><path d="M3.4 0.4h7.4l3.4 3.300v3.800l-3.400 3.400h-7.400l-3.300-3.400v-3.800z" fill="#000080"/><text x="7.200" y="9.300" font-size="9.600" font-weight="bold" fill="#fff" text-anchor="middle" font-family="Liberation Sans,sans-serif">P</text><text x="7" y="22.6" font-size="14" font-weight="bold" fill="#f00" text-anchor="middle" font-family="Liberation Sans,sans-serif">Y</text><path d="M12 22.2h9.6M14.4 22.2v-6.800M17.5 22.2v-9.700M20.6 22.2v-3.800" stroke="#000" stroke-width="1.800" fill="none"/></svg><svg class="i" style="left:59.8px;top:726.7px;" width="13" height="13" viewBox="0 0 13 13"><rect x="0.5" y="0.5" width="12" height="12" rx="1.500" fill="#f3f3f3" stroke="#8a8a8a" stroke-width="1.200"/><rect x="3" y="6" width="7" height="1.4" fill="#4a62a6"/></svg><svg class="i" style="left:87.5px;top:726.3px;" width="13" height="13" viewBox="0 0 13 13"><radialGradient id="g30" cx="0.38" cy="0.32" r="0.7"><stop offset="0" stop-color="#e4f7c4"/><stop offset="0.45" stop-color="#7cc84a"/><stop offset="1" stop-color="#2f7a1c"/></radialGradient><ellipse cx="7.400" cy="7.700" rx="4.500" ry="4.400" fill="#333" opacity="0.750"/><circle cx="6" cy="6" r="4.600" fill="url(#g30)"/></svg><svg class="i" style="left:105.8px;top:722px;" width="24" height="22" viewBox="0 0 24 22"><path d="M0 17.500H4.500M11.300 6.500L12.900 0.800L14.700 5.500V13.500" stroke="#0a8a0a" stroke-width="1.900" fill="none" stroke-linejoin="round"/><path d="M4.500 18L9 11.800L11.500 6.500M9.500 9.500L13 13" stroke="#1010ff" stroke-width="2.100" fill="none" stroke-linejoin="round"/><path d="M0.200 19.300H6L12 14.800L13 17.500" stroke="#e03000" stroke-width="1.700" fill="none" stroke-linejoin="round"/><path d="M13.6 20.5h9.6M16.0 20.5v-6.800M19.1 20.5v-9.700M22.2 20.5v-3.800" stroke="#000" stroke-width="1.800" fill="none"/></svg><svg class="i" style="left:116.1px;top:750.3px;" width="13" height="13" viewBox="0 0 13 13"><radialGradient id="g31" cx="0.38" cy="0.32" r="0.7"><stop offset="0" stop-color="#e4f7c4"/><stop offset="0.45" stop-color="#7cc84a"/><stop offset="1" stop-color="#2f7a1c"/></radialGradient><ellipse cx="7.400" cy="7.700" rx="4.500" ry="4.400" fill="#333" opacity="0.750"/><circle cx="6" cy="6" r="4.600" fill="url(#g31)"/></svg><svg class="i" style="left:134.3px;top:746px;" width="24" height="22" viewBox="0 0 24 22"><path d="M0 17.500H5.700L7.700 16L10.200 11.500L11.200 4.500L12.900 0.800L14.200 5V13" stroke="#1c961c" stroke-width="1.800" fill="none" stroke-linejoin="round"/><path d="M13.7 20.4h9.6M16.1 20.4v-6.800M19.2 20.4v-9.700M22.3 20.4v-3.800" stroke="#000" stroke-width="1.800" fill="none"/></svg><svg class="i" style="left:116.1px;top:774.3px;" width="13" height="13" viewBox="0 0 13 13"><radialGradient id="g32" cx="0.38" cy="0.32" r="0.7"><stop offset="0" stop-color="#e4f7c4"/><stop offset="0.45" stop-color="#7cc84a"/><stop offset="1" stop-color="#2f7a1c"/></radialGradient><ellipse cx="7.400" cy="7.700" rx="4.500" ry="4.400" fill="#333" opacity="0.750"/><circle cx="6" cy="6" r="4.600" fill="url(#g32)"/></svg><svg class="i" style="left:134.3px;top:770px;" width="24" height="22" viewBox="0 0 24 22"><path d="M0 17.500H5.700L7.700 16L10.200 11.500L11.200 4.500L12.900 0.800L14.200 5V13" stroke="#1c961c" stroke-width="1.800" fill="none" stroke-linejoin="round"/><path d="M13.7 20.4h9.6M16.1 20.4v-6.800M19.2 20.4v-9.700M22.3 20.4v-3.800" stroke="#000" stroke-width="1.800" fill="none"/></svg><svg class="i" style="left:116.1px;top:798.3px;" width="13" height="13" viewBox="0 0 13 13"><radialGradient id="g33" cx="0.38" cy="0.32" r="0.7"><stop offset="0" stop-color="#e4f7c4"/><stop offset="0.45" stop-color="#7cc84a"/><stop offset="1" stop-color="#2f7a1c"/></radialGradient><ellipse cx="7.400" cy="7.700" rx="4.500" ry="4.400" fill="#333" opacity="0.750"/><circle cx="6" cy="6" r="4.600" fill="url(#g33)"/></svg><svg class="i" style="left:134.3px;top:794px;" width="24" height="22" viewBox="0 0 24 22"><path d="M0 17.500H5.700L7.700 16L10.200 11.500L11.200 4.500L12.900 0.800L14.200 5V13" stroke="#1c961c" stroke-width="1.800" fill="none" stroke-linejoin="round"/><path d="M13.7 20.4h9.6M16.1 20.4v-6.800M19.2 20.4v-9.700M22.3 20.4v-3.800" stroke="#000" stroke-width="1.800" fill="none"/></svg><svg class="i" style="left:116.1px;top:822.3px;" width="13" height="13" viewBox="0 0 13 13"><radialGradient id="g34" cx="0.38" cy="0.32" r="0.7"><stop offset="0" stop-color="#e4f7c4"/><stop offset="0.45" stop-color="#7cc84a"/><stop offset="1" stop-color="#2f7a1c"/></radialGradient><ellipse cx="7.400" cy="7.700" rx="4.500" ry="4.400" fill="#333" opacity="0.750"/><circle cx="6" cy="6" r="4.600" fill="url(#g34)"/></svg><svg class="i" style="left:134.3px;top:818px;" width="24" height="22" viewBox="0 0 24 22"><path d="M0 17.500H5.700L7.700 16L10.200 11.500L11.200 4.500L12.900 0.800L14.200 5V13" stroke="#1c961c" stroke-width="1.800" fill="none" stroke-linejoin="round"/><path d="M13.7 20.4h9.6M16.1 20.4v-6.800M19.2 20.4v-9.700M22.3 20.4v-3.800" stroke="#000" stroke-width="1.800" fill="none"/></svg><svg class="i" style="left:116.1px;top:846.3px;" width="13" height="13" viewBox="0 0 13 13"><radialGradient id="g35" cx="0.38" cy="0.32" r="0.7"><stop offset="0" stop-color="#e4f7c4"/><stop offset="0.45" stop-color="#7cc84a"/><stop offset="1" stop-color="#2f7a1c"/></radialGradient><ellipse cx="7.400" cy="7.700" rx="4.500" ry="4.400" fill="#333" opacity="0.750"/><circle cx="6" cy="6" r="4.600" fill="url(#g35)"/></svg><svg class="i" style="left:134.3px;top:842px;" width="24" height="22" viewBox="0 0 24 22"><path d="M0 17.500H5.700L7.700 16L10.200 11.500L11.200 4.500L12.900 0.800L14.200 5V13" stroke="#1c961c" stroke-width="1.800" fill="none" stroke-linejoin="round"/><path d="M13.7 20.4h9.6M16.1 20.4v-6.800M19.2 20.4v-9.700M22.3 20.4v-3.800" stroke="#000" stroke-width="1.800" fill="none"/></svg>
<span class="t" style="left:57.12px;top:2px;font-size:18.9px;line-height:21px;color:#000;transform:scaleX(0.8470);">sp|P02768|ALBU_HUMAN</span><span class="t" style="left:109.55px;top:26px;font-size:18.9px;line-height:21px;color:#000;transform:scaleX(0.8670);word-spacing:2.5px;">K.LVNEVTEFAK.T [65, 74]</span><span class="t" style="left:138.15px;top:50px;font-size:18.9px;line-height:21px;color:#000;transform:scaleX(0.8650);">575.3111++</span><div class="b" style="left:163px;top:73px;width:200px;height:23px;background:#d9d9d9"></div><span class="t" style="left:167.29px;top:74px;font-size:18.9px;line-height:21px;color:#000;transform:scaleX(0.8393);">N [y8] - 951.4782+</span><span class="t" style="left:167.29px;top:98px;font-size:18.9px;line-height:21px;color:#000;transform:scaleX(0.8393);">E [y7] - 837.4353+</span><span class="t" style="left:109.55px;top:194px;font-size:18.9px;line-height:21px;color:#000;transform:scaleX(0.8670);word-spacing:2.5px;">K.SLHTLFGDK.L [88, 96]</span><span class="t" style="left:138.15px;top:218px;font-size:18.9px;line-height:21px;color:#000;transform:scaleX(0.8650);">339.8536+++</span><span class="t" style="left:109.43px;top:362px;font-size:18.9px;line-height:21px;color:#000;transform:scaleX(0.8745);">K.L</span><span class="t" style="left:134.08px;top:362px;font-size:18.9px;line-height:21px;color:#000;font-weight:bold;transform:scaleX(0.9616);text-decoration:underline;">C</span><span class="t" style="left:146.52px;top:362px;font-size:18.9px;line-height:21px;color:#000;transform:scaleX(0.8660);">TVATLR.E [97, 104]</span><span class="t" style="left:138.42px;top:386px;font-size:18.9px;line-height:21px;color:#000;transform:scaleX(0.8650);">467.2625++</span><span class="t" style="left:109.55px;top:530px;font-size:18.9px;line-height:21px;color:#000;transform:scaleX(0.8670);word-spacing:2.5px;">K.DDNPNLPR.L [130, 137]</span><span class="t" style="left:138.42px;top:554px;font-size:18.9px;line-height:21px;color:#000;transform:scaleX(0.8650);">470.7278++</span><span class="t" style="left:109.55px;top:698px;font-size:18.9px;line-height:21px;color:#000;transform:scaleX(0.8670);word-spacing:2.5px;">K.YLYEIAR.R [161, 167]</span><span class="t" style="left:138.42px;top:722px;font-size:18.9px;line-height:21px;color:#000;transform:scaleX(0.8650);">464.2504++</span><span class="t" style="left:167.29px;top:746px;font-size:18.9px;line-height:21px;color:#000;transform:scaleX(0.8393);">L [y6] - 764.4301+</span><span class="t" style="left:168.23px;top:770px;font-size:18.9px;line-height:21px;color:#000;transform:scaleX(0.8393);">Y [y5] - 651.3461+</span><span class="t" style="left:167.29px;top:794px;font-size:18.9px;line-height:21px;color:#000;transform:scaleX(0.8393);">E [y4] - 488.2827+</span><span class="t" style="left:167.13px;top:818px;font-size:18.9px;line-height:21px;color:#000;transform:scaleX(0.8393);">I [y3] - 359.2401+</span><span class="t" style="left:167.29px;top:842px;font-size:18.9px;line-height:21px;color:#000;transform:scaleX(0.8393);">L [b2] - 277.1547+</span>
</div>
<div class="b" style="left:800px;top:110px;width:488px;height:35px;background:#f0f0f0"></div>
<div class="b" style="left:800px;top:145px;width:488px;height:1px;background:#a8a8a8"></div>
<div class="b" style="left:800px;top:575px;width:1101px;height:2px;background:#b4b4b4"></div>
<div class="b" style="left:800px;top:577px;width:1101px;height:6px;background:#f8f8f8"></div>
<div class="b" style="left:1288px;top:110px;width:5px;height:465px;background:#f8f8f8"></div>
<div class="b" style="left:1292px;top:110px;width:2px;height:465px;background:#a6a6a6"></div>
<svg class="i" style="left:1190px;top:110px;" width="100" height="35" viewBox="0 0 100 35"><path d="M16.800 10.500v14.500l-7.500-7.250z" fill="#fff" stroke="#333" stroke-width="1.200"/><path d="M32 10.500v14.500l7.500-7.250z" fill="#fff" stroke="#333" stroke-width="1.200"/><path d="M51 18h13l-6.500 6.500z" fill="#000"/><path d="M74.500 12.500l12.500 11.500M87 12.500l-12.500 11.500" stroke="#000" stroke-width="2.200"/></svg>
<svg class="i" style="left:0px;top:0px;" width="1901" height="1020" viewBox="0 0 1901 1020"><rect x="835.5" y="178" width="346" height="303" fill="#fafad2"/><polygon points="938.0,481.0 940.5,475.6 942.5,466.7 944.8,453.2 948.2,420.0 951.5,320.1 953.4,265.0 954.5,229.9 955.6,215.1 957.2,211.0 960.2,211.0 961.8,215.1 962.9,229.9 964.0,265.0 967.0,320.1 974.0,420.0 982.5,453.2 991.5,466.7 1008.0,475.1 1030.0,479.6 1050.0,481.0" fill="#fac8aa"/><polyline points="946.0,481.0 948.0,480.0 956.3,477.0 966.0,478.8 985.0,480.5 1000.0,481.0" fill="none" stroke="#4169e1" stroke-width="2.600" stroke-linejoin="round"/><polyline points="946.0,481.0 948.0,480.2 956.3,478.0 966.0,479.4 985.0,480.6 1000.0,481.0" fill="none" stroke="#0000ff" stroke-width="2.600" stroke-linejoin="round"/><polyline points="946.0,481.0 948.0,479.5 956.3,475.0 966.0,477.7 985.0,480.3 1000.0,481.0" fill="none" stroke="#7570b3" stroke-width="2.600" stroke-linejoin="round"/><polyline points="946.0,481.0 948.0,478.4 956.3,470.5 966.0,475.2 985.0,479.7 1000.0,481.0" fill="none" stroke="#6b8e23" stroke-width="2.600" stroke-linejoin="round"/><polyline points="946.0,481.0 948.0,476.6 956.3,463.5 966.0,471.4 985.0,478.9 1000.0,481.0" fill="none" stroke="#800000" stroke-width="2.600" stroke-linejoin="round"/><polyline points="938.0,481.0 940.5,475.6 942.5,466.7 944.8,453.2 948.2,420.0 951.5,320.1 953.4,265.0 954.5,229.9 955.6,215.1 957.2,211.0 960.2,211.0 961.8,215.1 962.9,229.9 964.0,265.0 967.0,320.1 974.0,420.0 982.5,453.2 991.5,466.7 1008.0,475.1 1030.0,479.6 1050.0,481.0" fill="none" stroke="#ff0000" stroke-width="3.400" stroke-linejoin="round"/><polygon points="954.5,229.9 955.6,215.1 957.2,211.0 960.2,211.0 961.8,215.1 962.9,229.9" fill="#ff0000"/><polyline points="937.4,481.0 939.8,478.9 941.6,475.5 943.8,470.4 946.9,457.7 950.0,419.6 951.8,398.6 952.8,385.2 953.8,379.5 955.3,378.0 958.1,378.0 959.6,379.5 960.6,385.2 961.6,398.6 964.4,419.6 970.9,457.7 978.8,470.4 987.2,475.5 1002.5,478.7 1023.0,480.5 1041.6,481.0" fill="none" stroke="#800080" stroke-width="2.800" stroke-linejoin="round"/><polyline points="937.8,481.0 940.2,478.1 942.1,473.2 944.3,465.9 947.5,447.8 950.7,393.4 952.5,363.4 953.5,344.3 954.6,336.2 956.1,334.0 958.9,334.0 960.4,336.2 961.5,344.3 962.5,363.4 965.4,393.4 972.0,447.8 980.1,465.9 988.7,473.2 1004.3,477.8 1025.2,480.3 1044.2,481.0" fill="none" stroke="#ff00ff" stroke-width="2.800" stroke-linejoin="round"/><polyline points="940.3,481.0 942.5,476.0 944.3,467.6 946.4,455.0 949.5,424.0 952.4,330.8 954.1,279.4 955.1,246.6 956.1,232.8 957.6,229.0 960.3,229.0 961.7,232.8 962.7,246.6 963.7,279.4 966.4,330.8 972.7,424.0 980.3,455.0 988.4,467.6 1003.3,475.5 1023.1,479.7 1041.1,481.0" fill="none" stroke="#32cd32" stroke-width="2.600" stroke-linejoin="round"/><path d="M916 479.800c3-1 6-1 9 0M1071 479.600c4-0.600 8-0.600 12 0M990 473.500c3-1 6-0.500 8 1" stroke="#ff0000" stroke-width="1.500" fill="none"/><path d="M1008.200 232V481" stroke="#808080" stroke-width="1.200"/><path d="M810 482H1257.500" stroke="#000" stroke-width="1.600"/><path d="M912.2 474.700V490.500M981.3 474.700V490.500M1050.3 474.700V490.500M1119.4 474.700V490.500M1188.4 474.700V490.500M1257.5 474.700V490.500M884.6 478.800V486.800M898.4 478.800V486.800M926.0 478.800V486.800M939.8 478.800V486.800M953.6 478.800V486.800M967.4 478.800V486.800M995.1 478.800V486.800M1008.9 478.800V486.800M1022.7 478.800V486.800M1036.5 478.800V486.800M1064.1 478.800V486.800M1077.9 478.800V486.800M1091.8 478.800V486.800M1105.6 478.800V486.800M1133.2 478.800V486.800M1147.0 478.800V486.800M1160.8 478.800V486.800M1174.6 478.800V486.800M1202.3 478.800V486.800M1216.1 478.800V486.800M1229.9 478.800V486.800M1243.7 478.800V486.800" stroke="#000" stroke-width="1.300"/><path d="M810 481.500H1156.400" stroke="#1010d8" stroke-width="3.200"/><path d="M937 204.300L943.500 207.200L955 209.500V211L943.500 213.600L937 216.700z" fill="#000"/><rect x="966.700" y="181.700" width="84.600" height="44" fill="#fff" opacity="0.720"/><rect x="1026.700" y="445" width="21" height="21.700" fill="#fff" opacity="0.800"/><path d="M904.700 213.500V481M1026.200 213.500V481" stroke="#000" stroke-width="1.300" stroke-dasharray="4.200 2.600"/></svg>
<span class="t" style="left:969.66px;top:183px;font-size:18px;line-height:20px;color:#8a8a8a;transform:scaleX(1.0281);">Predicted</span>
<div class="b" style="left:945px;top:183.5px;width:31px;height:22px;background:rgba(255,255,255,0.72);"></div>
<span class="t" style="left:946.57px;top:184px;font-size:18px;line-height:20px;color:#ff0000;transform:scaleX(0.9962);">6.7</span>
<span class="t" style="left:995.08px;top:203px;font-size:18px;line-height:20px;color:#8a8a8a;transform:scaleX(0.9761);">7.4</span>
<span class="t" style="left:1033.50px;top:446px;font-size:18px;line-height:20px;color:#ff0000;font-weight:bold;transform:scaleX(0.9863);">?</span>
<span class="t" style="left:905.80px;top:497px;font-size:23.4px;line-height:26px;color:#000;transform:scaleX(0.9700);">6</span>
<span class="t" style="left:974.95px;top:497px;font-size:23.4px;line-height:26px;color:#000;transform:scaleX(0.9700);">7</span>
<span class="t" style="left:1044.02px;top:497px;font-size:23.4px;line-height:26px;color:#000;transform:scaleX(0.9700);">8</span>
<span class="t" style="left:1113.11px;top:497px;font-size:23.4px;line-height:26px;color:#000;transform:scaleX(0.9700);">9</span>
<span class="t" style="left:1175.44px;top:497px;font-size:23.4px;line-height:26px;color:#000;transform:scaleX(0.9700);">10</span>
<span class="t" style="left:1245.44px;top:497px;font-size:23.4px;line-height:26px;color:#000;transform:scaleX(0.9700);">11</span>
<span class="t" style="left:936.84px;top:533px;font-size:21.3px;line-height:24px;color:#000;font-weight:bold;transform:scaleX(1.0184);">Retention Time</span>
<div class="b" style="left:1294px;top:110px;width:607px;height:35px;background:#f0f0f0"></div>
<svg class="i" style="left:0px;top:0px;" width="1901" height="1020" viewBox="0 0 1901 1020"><path d="M1294 145.500H1298.500L1328 117.500Q1330 115.500 1333 115.500H1620Q1624 115.500 1624 119.500V145.500H1901V180H1294z" fill="#fff"/><path d="M1294 145.500H1298.500L1328 117.500Q1330 115.500 1333 115.500H1620Q1624 115.500 1624 119.500V145.500H1901" fill="none" stroke="#a3a3a3" stroke-width="1.200"/><path d="M1830.800 120.500v14.500l-7.500-7.250z" fill="#fff" stroke="#333" stroke-width="1.200"/><path d="M1846 120.500v14.500l7.500-7.250z" fill="#fff" stroke="#333" stroke-width="1.200"/><path d="M1865 128h13l-6.500 6.500z" fill="#000"/><path d="M1888.500 122.500l12.500 11.500M1901 122.500l-12.500 11.500" stroke="#000" stroke-width="2.200"/><path d="M1405.800 176.600V490M1398 490H1855M1849.700 176.600V490" stroke="#000" stroke-width="1.400" fill="none"/><path d="M1398.300 490.0H1413.300M1401.800 474.3H1409.800M1401.800 458.7H1409.800M1401.800 443.0H1409.800M1398.300 427.3H1413.300M1401.800 411.7H1409.800M1401.800 396.0H1409.800M1401.800 380.3H1409.800M1398.300 364.7H1413.300M1401.800 349.0H1409.800M1401.800 333.4H1409.800M1401.800 317.7H1409.800M1398.300 302.0H1413.300M1401.800 286.4H1409.800M1401.800 270.7H1409.800M1401.800 255.0H1409.800M1398.300 239.4H1413.300M1401.800 223.7H1409.800M1401.800 208.0H1409.800M1401.800 192.4H1409.800M1398.300 176.7H1413.300" stroke="#000" stroke-width="1.300"/><rect x="1517.6" y="488" width="18.0" height="1.4" fill="#008000"/><rect x="1580.6" y="368.4" width="16.5" height="121.0" fill="#800080"/><rect x="1601.6" y="209" width="16.4" height="280.4" fill="#32cd32"/><rect x="1621.2" y="177.4" width="17.8" height="312.0" fill="#ff0000"/><rect x="1642.1" y="317.4" width="17.9" height="172.0" fill="#ff00ff"/><rect x="1663.1" y="461.3" width="17.9" height="28.1" fill="#800000"/><rect x="1684" y="474.7" width="16.5" height="14.7" fill="#6b8e23"/><rect x="1705" y="483.7" width="16.5" height="5.7" fill="#4169e1"/><rect x="1724.5" y="486.7" width="17.9" height="2.7" fill="#0000ff"/><path d="M1630.900 482.200V498.400" stroke="#000" stroke-width="1.300"/></svg>
<span class="t" style="left:1332.36px;top:121px;font-size:18.2px;line-height:20px;color:#000;transform:scaleX(0.9600);">Peak Areas - Replicate Comparison</span>
<span class="t" style="left:1361.16px;top:475px;font-size:23.4px;line-height:26px;color:#000;transform:scaleX(0.9400);">0</span>
<span class="t" style="left:1354.34px;top:413px;font-size:23.4px;line-height:26px;color:#000;transform:scaleX(0.9400);">20</span>
<span class="t" style="left:1354.34px;top:350px;font-size:23.4px;line-height:26px;color:#000;transform:scaleX(0.9400);">40</span>
<span class="t" style="left:1354.34px;top:287px;font-size:23.4px;line-height:26px;color:#000;transform:scaleX(0.9400);">60</span>
<span class="t" style="left:1354.34px;top:225px;font-size:23.4px;line-height:26px;color:#000;transform:scaleX(0.9400);">80</span>
<span class="t" style="left:1347.82px;top:162px;font-size:23.4px;line-height:26px;color:#000;transform:scaleX(0.9400);">100</span>
<span class="t" style="left:1588.46px;top:505px;font-size:18px;line-height:20px;color:#000;transform:scaleX(1.0261);">RoughCV</span>
<span class="t" style="left:1581.53px;top:533px;font-size:21.3px;line-height:24px;color:#000;font-weight:bold;transform:scaleX(1.0209);">Replicate</span>
<span class="t" style="left:0;top:0;font-size:21.3px;line-height:24px;font-weight:bold;transform-origin:0 0;transform:translate(1328px,500.43px) rotate(-90deg) scaleX(0.9963) translateY(-19px)">Percent of Regression Peak Area</span>
<div class="b" style="left:800px;top:583px;width:1101px;height:27px;background:#bfbfbf;border-top:1px solid #a8a8a8"></div>
<span class="t" style="left:669.51px;top:585px;font-size:18.4px;line-height:21px;color:#000;transform:scaleX(0.9829);">Retention Times - Replicate Comparison</span>
<svg class="i" style="left:0px;top:0px;" width="1901" height="1020" viewBox="0 0 1901 1020"><path d="M1868.500 590h6v8.500h-6zM1873.300 590v8.500M1866 598.800h10.500M1871.200 599v5" stroke="#000" stroke-width="1.500" fill="none"/><path d="M1889.500 590.500l12.500 11.500M1902 590.500l-12.500 11.500" stroke="#000" stroke-width="2.200"/><rect x="740" y="640" width="980.500" height="112.500" fill="#fff" stroke="#000" stroke-width="1.600"/><rect x="759.8" y="650.3" width="42.200" height="10.600" fill="#0000ff"/><rect x="953.4" y="650.3" width="42.200" height="10.600" fill="#8a2be2"/><rect x="1147.0" y="650.3" width="42.200" height="10.600" fill="#a52a2a"/><rect x="1340.6" y="650.3" width="42.200" height="10.600" fill="#d2691e"/><rect x="1534.2" y="650.3" width="42.200" height="10.600" fill="#008b8b"/><rect x="759.8" y="671.3" width="42.200" height="10.600" fill="#008000"/><rect x="953.4" y="671.3" width="42.200" height="10.600" fill="#ffa500"/><rect x="1147.0" y="671.3" width="42.200" height="10.600" fill="#7570b3"/><rect x="1340.6" y="671.3" width="42.200" height="10.600" fill="#800080"/><rect x="1534.2" y="671.3" width="42.200" height="10.600" fill="#32cd32"/><rect x="759.8" y="692.3" width="42.200" height="10.600" fill="#ff0000"/><rect x="953.4" y="692.3" width="42.200" height="10.600" fill="#ff00ff"/><rect x="1147.0" y="692.3" width="42.200" height="10.600" fill="#800000"/><rect x="1340.6" y="692.3" width="42.200" height="10.600" fill="#6b8e23"/><rect x="1534.2" y="692.3" width="42.200" height="10.600" fill="#4169e1"/><rect x="759.8" y="713.3" width="42.200" height="10.600" fill="#0000ff"/><rect x="953.4" y="713.3" width="42.200" height="10.600" fill="#8a2be2"/><rect x="1147.0" y="713.3" width="42.200" height="10.600" fill="#a52a2a"/><rect x="1340.6" y="713.3" width="42.200" height="10.600" fill="#d2691e"/><rect x="1534.2" y="713.3" width="42.200" height="10.600" fill="#008b8b"/><rect x="759.8" y="734.3" width="42.200" height="10.600" fill="#008000"/><rect x="755" y="780" width="1099.700" height="81" fill="#fff"/><rect x="775.5" y="780.600" width="42.200" height="79.800" fill="#0000ff"/><path d="M775.3 823H818.1M796.6 819V828M792.9 819h7.400M792.9 828h7.400" stroke="#000" stroke-width="1.300" fill="none"/><rect x="826.3" y="780.600" width="42.200" height="79.800" fill="#8a2be2"/><path d="M826.1 826.5H868.9M847.4 822V831M843.7 822h7.400M843.7 831h7.400" stroke="#000" stroke-width="1.300" fill="none"/><rect x="877.0" y="780.600" width="42.200" height="79.800" fill="#a52a2a"/><path d="M876.8 811.6H919.6M898.1 808V815M894.4 808h7.400M894.4 815h7.400" stroke="#000" stroke-width="1.300" fill="none"/><rect x="927.8" y="780.600" width="42.200" height="79.800" fill="#d2691e"/><path d="M927.6 814.4H970.4M948.9 808V820.6M945.2 808h7.400M945.2 820.6h7.400" stroke="#000" stroke-width="1.300" fill="none"/><rect x="978.5" y="780.600" width="42.200" height="79.800" fill="#008b8b"/><path d="M978.3 823.6H1021.1M999.6 820.4V828.4M995.9 820.4h7.400M995.9 828.4h7.400" stroke="#000" stroke-width="1.300" fill="none"/><rect x="1029.3" y="780.600" width="42.200" height="79.800" fill="#008000"/><path d="M1029.1 823.6H1071.9M1050.4 818.6V828.4M1046.7 818.6h7.400M1046.7 828.4h7.400" stroke="#000" stroke-width="1.300" fill="none"/><rect x="1080.1" y="780.600" width="42.200" height="79.800" fill="#ffa500"/><path d="M1079.9 823.6H1122.7M1101.2 820.4V827M1097.5 820.4h7.400M1097.5 827h7.400" stroke="#000" stroke-width="1.300" fill="none"/><rect x="1130.8" y="780.600" width="42.200" height="79.800" fill="#7570b3"/><path d="M1130.6 823.6H1173.4M1151.9 820.4V828.4M1148.2 820.4h7.400M1148.2 828.4h7.400" stroke="#000" stroke-width="1.300" fill="none"/><rect x="1181.6" y="780.600" width="42.200" height="79.800" fill="#800080"/><path d="M1181.4 826.4H1224.2M1202.7 821.4V832.5M1199.0 821.4h7.400M1199.0 832.5h7.400" stroke="#000" stroke-width="1.300" fill="none"/><rect x="1232.3" y="780.600" width="42.200" height="79.800" fill="#32cd32"/><path d="M1232.1 823.2H1274.9M1253.4 818.3V830.3M1249.7 818.3h7.400M1249.7 830.3h7.400" stroke="#000" stroke-width="1.300" fill="none"/><rect x="1283.1" y="780.600" width="42.200" height="79.800" fill="#ff0000"/><path d="M1282.9 823.6H1325.7M1304.2 818.5V830M1300.5 818.5h7.400M1300.5 830h7.400" stroke="#000" stroke-width="1.300" fill="none"/><rect x="1333.9" y="780.600" width="42.200" height="79.800" fill="#ff00ff"/><path d="M1333.7 826.4H1376.5M1355.0 821.5V832.6M1351.3 821.5h7.400M1351.3 832.6h7.400" stroke="#000" stroke-width="1.300" fill="none"/><rect x="1384.6" y="780.600" width="42.200" height="79.800" fill="#800000"/><path d="M1384.4 826.4H1427.2M1405.7 820.2V833.9M1402.0 820.2h7.400M1402.0 833.9h7.400" stroke="#000" stroke-width="1.300" fill="none"/><rect x="1435.4" y="780.600" width="42.200" height="79.800" fill="#6b8e23"/><path d="M1435.2 826.4H1478.0M1456.5 821V832.6M1452.8 821h7.400M1452.8 832.6h7.400" stroke="#000" stroke-width="1.300" fill="none"/><rect x="1486.1" y="780.600" width="42.200" height="79.800" fill="#4169e1"/><path d="M1485.9 823.3H1528.7M1507.2 818.9V829.5M1503.5 818.9h7.400M1503.5 829.5h7.400" stroke="#000" stroke-width="1.300" fill="none"/><rect x="1536.9" y="780.600" width="42.200" height="79.800" fill="#0000ff"/><path d="M1536.7 826.4H1579.5M1558.0 821.5V832.6M1554.3 821.5h7.400M1554.3 832.6h7.400" stroke="#000" stroke-width="1.300" fill="none"/><rect x="1587.7" y="780.600" width="42.200" height="79.800" fill="#8a2be2"/><path d="M1587.5 823.3H1630.3M1608.8 819V828M1605.1 819h7.400M1605.1 828h7.400" stroke="#000" stroke-width="1.300" fill="none"/><rect x="1638.4" y="780.600" width="42.200" height="79.800" fill="#a52a2a"/><path d="M1638.2 826.4H1681.0M1659.5 822.5V830.5M1655.8 822.5h7.400M1655.8 830.5h7.400" stroke="#000" stroke-width="1.300" fill="none"/><rect x="1689.2" y="780.600" width="42.200" height="79.800" fill="#d2691e"/><path d="M1689.0 826.4H1731.8M1710.3 822.5V830.5M1706.6 822.5h7.400M1706.6 830.5h7.400" stroke="#000" stroke-width="1.300" fill="none"/><rect x="1739.9" y="780.600" width="42.200" height="79.800" fill="#008b8b"/><path d="M1739.7 826.4H1782.5M1761.0 821.5V832.6M1757.3 821.5h7.400M1757.3 832.6h7.400" stroke="#000" stroke-width="1.300" fill="none"/><rect x="1790.7" y="780.600" width="42.200" height="79.800" fill="#008000"/><path d="M1790.5 817.6H1833.3M1811.8 809.6V827.3M1808.1 809.6h7.400M1808.1 827.3h7.400" stroke="#000" stroke-width="1.300" fill="none"/><rect x="755" y="780" width="1099.700" height="81" fill="none" stroke="#1c1c1c" stroke-width="1.500"/><path d="M814 903H1854.700M1304.400 895.700V910.700" stroke="#1c1c1c" stroke-width="1.500"/></svg>
<span class="t" style="left:815.81px;top:646px;font-size:17.7px;line-height:20px;color:#000;">Step -10</span><span class="t" style="left:1007.29px;top:646px;font-size:17.7px;line-height:20px;color:#000;">Step -9</span><span class="t" style="left:1200.89px;top:646px;font-size:17.7px;line-height:20px;color:#000;">Step -8</span><span class="t" style="left:1394.49px;top:646px;font-size:17.7px;line-height:20px;color:#000;">Step -7</span><span class="t" style="left:1588.09px;top:646px;font-size:17.7px;line-height:20px;color:#000;">Step -6</span><span class="t" style="left:814.62px;top:667px;font-size:17.7px;line-height:20px;color:#000;">Step -5</span><span class="t" style="left:1007.29px;top:667px;font-size:17.7px;line-height:20px;color:#000;">Step -4</span><span class="t" style="left:1200.89px;top:667px;font-size:17.7px;line-height:20px;color:#000;">Step -3</span><span class="t" style="left:1394.49px;top:667px;font-size:17.7px;line-height:20px;color:#000;">Step -2</span><span class="t" style="left:1588.09px;top:667px;font-size:17.7px;line-height:20px;color:#000;">Step -1</span><span class="t" style="left:853.15px;top:688px;font-size:17.7px;line-height:20px;color:#000;">837.4625+</span><span class="t" style="left:1007.29px;top:688px;font-size:17.7px;line-height:20px;color:#000;">Step 1</span><span class="t" style="left:1200.89px;top:688px;font-size:17.7px;line-height:20px;color:#000;">Step 2</span><span class="t" style="left:1394.49px;top:688px;font-size:17.7px;line-height:20px;color:#000;">Step 3</span><span class="t" style="left:1588.09px;top:688px;font-size:17.7px;line-height:20px;color:#000;">Step 4</span><span class="t" style="left:810.56px;top:709px;font-size:17.7px;line-height:20px;color:#000;">Step 5</span><span class="t" style="left:1007.29px;top:709px;font-size:17.7px;line-height:20px;color:#000;">Step 6</span><span class="t" style="left:1200.89px;top:709px;font-size:17.7px;line-height:20px;color:#000;">Step 7</span><span class="t" style="left:1394.49px;top:709px;font-size:17.7px;line-height:20px;color:#000;">Step 8</span><span class="t" style="left:1588.09px;top:709px;font-size:17.7px;line-height:20px;color:#000;">Step 9</span><span class="t" style="left:815.29px;top:730px;font-size:17.7px;line-height:20px;color:#000;">Step 10</span>
<span class="t" style="left:1264.25px;top:918px;font-size:18px;line-height:20px;color:#000;">RoughCV</span>
<span class="t" style="left:1256.28px;top:946px;font-size:21.3px;line-height:24px;color:#000;font-weight:bold;">Replicate</span>
<div class="b dlg" style="left:219px;top:93px;width:595px;height:903px;"><div class="b" style="left:0;top:0;width:593px;height:46px;background:#fff"></div>
<span class="t" style="left:12.23px;top:14px;font-size:17.6px;line-height:20px;color:#999;transform:scaleX(0.9922);">Transition Settings</span>
<svg class="i" style="left:558.4px;top:12.4px;" width="20" height="20" viewBox="0 0 20 20"><path d="M2.5 2.5L17.5 17.5M17.5 2.5L2.5 17.5" stroke="#777" stroke-width="1.2"/></svg>
<div class="b" style="left:18px;top:94px;width:554px;height:741px;background:#fff;border:1px solid #dcdcdc;"></div>
<div class="b" style="left:18px;top:64px;width:93.5px;height:31px;background:#fff;border:1px solid #dcdcdc;border-bottom:none;"></div>
<div class="b" style="left:111.5px;top:67px;width:60.5px;height:27px;background:#f0f0f0;border:1px solid #dcdcdc;border-bottom:none;"></div>
<div class="b" style="left:171.5px;top:67px;width:65.0px;height:27px;background:#f0f0f0;border:1px solid #dcdcdc;border-bottom:none;"></div>
<div class="b" style="left:236px;top:67px;width:92px;height:27px;background:#f0f0f0;border:1px solid #dcdcdc;border-bottom:none;"></div>
<div class="b" style="left:327.5px;top:67px;width:82.0px;height:27px;background:#f0f0f0;border:1px solid #dcdcdc;border-bottom:none;"></div>
<span class="t" style="left:28.89px;top:68px;font-size:18.5px;line-height:21px;color:#000;transform:scaleX(0.8716);">Prediction</span>
<span class="t" style="left:117.99px;top:70px;font-size:18.5px;line-height:21px;color:#000;transform:scaleX(0.8089);">Filter</span>
<span class="t" style="left:180.77px;top:70px;font-size:18.5px;line-height:21px;color:#000;transform:scaleX(0.8218);">Library</span>
<span class="t" style="left:244.98px;top:70px;font-size:18.5px;line-height:21px;color:#000;transform:scaleX(0.8438);">Instrument</span>
<span class="t" style="left:336.72px;top:70px;font-size:18.5px;line-height:21px;color:#000;transform:scaleX(0.8556);">Full-Scan</span>
<span class="t" style="left:57.93px;top:129px;font-size:18.5px;line-height:21px;color:#000;transform:scaleX(0.8460);">Precursor mass:</span>
<span class="t" style="left:335.91px;top:129px;font-size:18.5px;line-height:21px;color:#000;transform:scaleX(0.8587);">Product ion mass:</span>
<div class="b" style="left:59px;top:156px;width:181px;height:30px;background:#e4e4e4;border:1px solid #adadad;"></div>
<div class="b" style="left:337px;top:156px;width:181px;height:30px;background:#e4e4e4;border:1px solid #adadad;"></div>
<div class="b btnd" style="left:342.4px;top:850px;width:109.2px;height:31.4px;"></div>
<span class="t" style="left:382.39px;top:855px;font-size:18.5px;line-height:21px;color:#000;transform:scaleX(0.9288);">OK</span>
<div class="b btn" style="left:464px;top:850px;width:109.4px;height:31.4px;"></div>
<span class="t" style="left:490.76px;top:855px;font-size:18.5px;line-height:21px;color:#000;transform:scaleX(0.8983);">Cancel</span>
</div>
<div class="b dlg" style="left:165px;top:251px;width:703px;height:587px;"><div class="b" style="left:0;top:0;width:701px;height:46px;background:#fff"></div>
<svg class="i" style="left:12px;top:10.600000000000023px;" width="24" height="24" viewBox="0 0 24 24"><path d="M6.2 0.8h1v2.4l5 4.2v1.3h-3.2c-0.5 3.5-0.3 8 0.9 11.6h-6.4c1.2-3.6 1.4-8.1 0.9-11.6h-3.2v-1.3l5-4.2z" fill="#2a60aa"/><path d="M10.8 11.2h2.3c0 3.5 0.3 6 1.7 7.2v-6.4c0-1.3 1.2-2.1 2.9-2.1s2.9 0.8 2.9 2.1v8.4h-9.8z" fill="#2459a6"/><path d="M1.5 20.2h21l1.5 2v1.3h-24v-1.3z" fill="#0d4596"/><rect x="0" y="22" width="24" height="1.6" fill="#00358a"/></svg>
<span class="t" style="left:40.33px;top:14px;font-size:17.6px;line-height:20px;color:#999;transform:scaleX(1.0239);">Edit Optimization Library</span>
<svg class="i" style="left:666.4px;top:12px;" width="20" height="20" viewBox="0 0 20 20"><path d="M2.5 2.5L17.5 17.5M17.5 2.5L2.5 17.5" stroke="#777" stroke-width="1.2"/></svg>
<span class="t" style="left:21.88px;top:59px;font-size:18.5px;line-height:21px;color:#000;transform:scaleX(0.8770);">Name:</span>
<div class="b inp" style="left:22.6px;top:83.6px;width:264.6px;height:30px;"></div>
<span class="t" style="left:27.82px;top:88px;font-size:18.5px;line-height:21px;color:#000;transform:scaleX(0.8614);">TEST</span>
<span class="t" style="left:21.67px;top:146px;font-size:18.5px;line-height:21px;color:#000;transform:scaleX(0.8367);">Optimization library:</span>
<div class="b inp" style="left:22.6px;top:171.6px;width:505.6px;height:30px;"></div>
<span class="t" style="left:25.74px;top:174px;font-size:18.5px;line-height:21px;color:#000;transform:scaleX(0.9130);">C:\Users\CMWATS2\Documents\Skyline\HSA\TEST.optdb</span>
<div class="b btn" style="left:572px;top:61px;width:109.4px;height:31.2px;"></div>
<span class="t" style="left:612.42px;top:66px;font-size:18.5px;line-height:21px;color:#000;transform:scaleX(0.8898);">OK</span>
<div class="b btn" style="left:572px;top:104.6px;width:109.4px;height:31.4px;"></div>
<span class="t" style="left:598.97px;top:110px;font-size:18.5px;line-height:21px;color:#000;transform:scaleX(0.8875);">Cancel</span>
<div class="b" style="left:18px;top:348px;width:665.4px;height:179.6px;background:#ababab;border:1.3px solid #1a1a1a;"></div>
<span class="t" style="left:18.01px;top:543px;font-size:18.5px;line-height:21px;color:#000;transform:scaleX(0.8567);">0 optimized compensation voltages</span>
<div class="b btnd" style="left:572px;top:538.6px;width:109.4px;height:31.4px;"></div>
<span class="t" style="left:605.15px;top:544px;font-size:18.5px;line-height:21px;color:#000;transform:scaleX(0.8762);">Add...</span>
<svg class="i" style="left:0px;top:0px;" width="701" height="585" viewBox="0 0 701 585"><rect x="695.0" y="570.2" width="2.600" height="2.600" fill="#bfbfbf"/><rect x="690.6" y="574.6" width="2.600" height="2.600" fill="#bfbfbf"/><rect x="695.0" y="574.6" width="2.600" height="2.600" fill="#bfbfbf"/><rect x="686.2" y="579.0" width="2.600" height="2.600" fill="#bfbfbf"/><rect x="690.6" y="579.0" width="2.600" height="2.600" fill="#bfbfbf"/><rect x="695.0" y="579.0" width="2.600" height="2.600" fill="#bfbfbf"/></svg>
</div>
<div class="b dlg dlga" style="left:161px;top:456px;width:712px;height:174px;"><div class="b" style="left:0;top:0;width:710px;height:46px;background:#fff"></div>
<svg class="i" style="left:12px;top:11px;" width="24" height="24" viewBox="0 0 24 24"><path d="M6.2 0.8h1v2.4l5 4.2v1.3h-3.2c-0.5 3.5-0.3 8 0.9 11.6h-6.4c1.2-3.6 1.4-8.1 0.9-11.6h-3.2v-1.3l5-4.2z" fill="#2a60aa"/><path d="M10.8 11.2h2.3c0 3.5 0.3 6 1.7 7.2v-6.4c0-1.3 1.2-2.1 2.9-2.1s2.9 0.8 2.9 2.1v8.4h-9.8z" fill="#2459a6"/><path d="M1.5 20.2h21l1.5 2v1.3h-24v-1.3z" fill="#0d4596"/><rect x="0" y="22" width="24" height="1.6" fill="#00358a"/></svg>
<span class="t" style="left:41.34px;top:14px;font-size:17.8px;line-height:20px;color:#000;transform:scaleX(1.0365);">Add Optimizations</span>
<svg class="i" style="left:675.6px;top:12.4px;" width="20" height="20" viewBox="0 0 20 20"><path d="M2.5 2.5L17.5 17.5M17.5 2.5L2.5 17.5" stroke="#000" stroke-width="1.3"/></svg>
<span class="t" style="left:21.91px;top:64px;font-size:18.5px;line-height:21px;color:#000;transform:scaleX(0.8595);">No new optimizations will be added to the library.</span>
<div class="b btnd" style="left:585.4px;top:67px;width:109.6px;height:31.6px;"></div>
<span class="t" style="left:625.80px;top:72px;font-size:18.5px;line-height:21px;color:#000;transform:scaleX(0.9132);">OK</span>
<div class="b btn" style="left:585.4px;top:112px;width:109.6px;height:31.4px;"></div>
<span class="t" style="left:612.37px;top:117px;font-size:18.5px;line-height:21px;color:#000;transform:scaleX(0.8875);">Cancel</span>
</div>
</body></html>
